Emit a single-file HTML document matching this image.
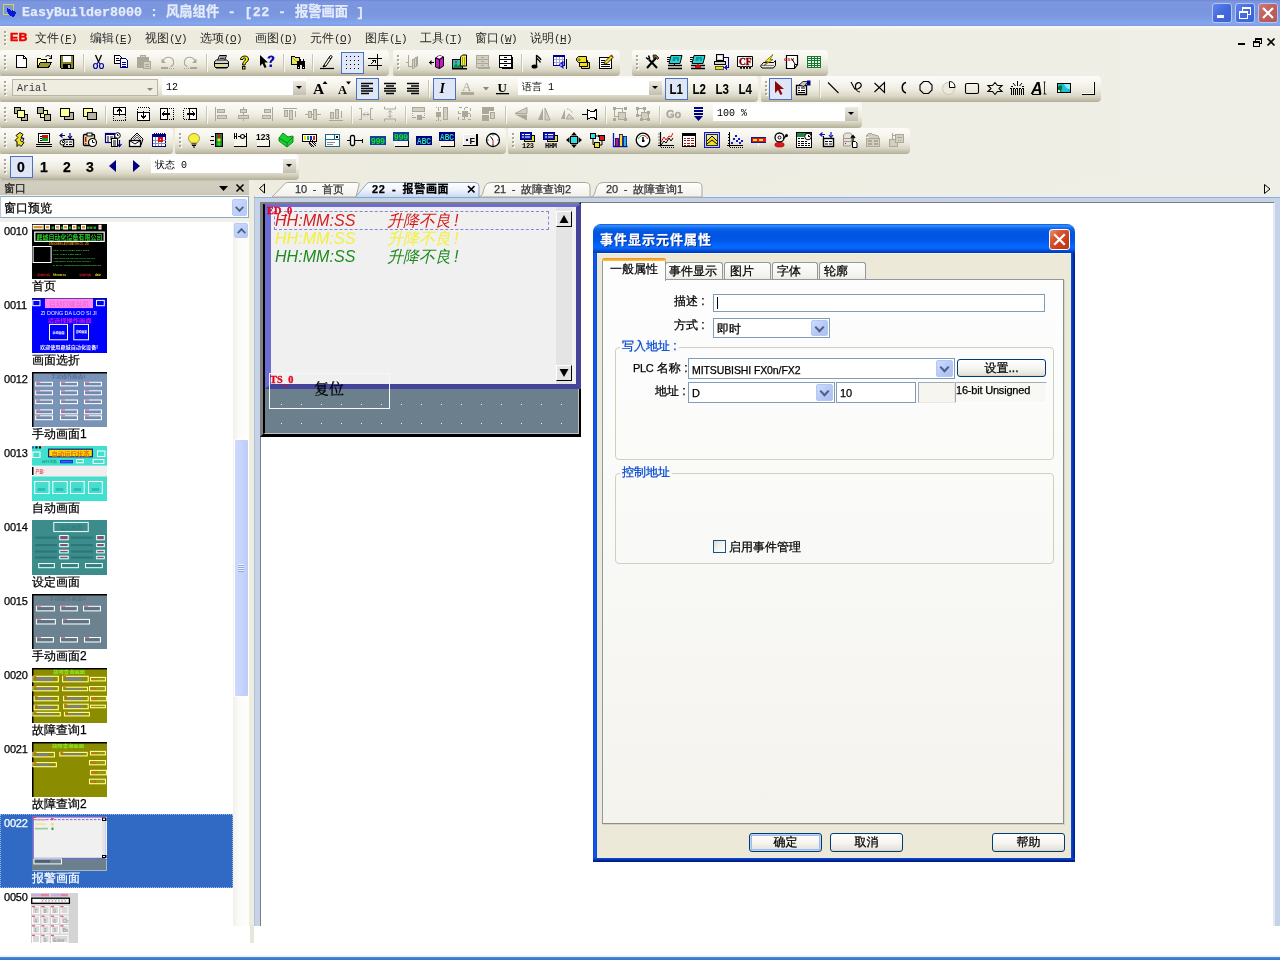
<!DOCTYPE html>
<html lang="zh-CN"><head><meta charset="utf-8"><title>EasyBuilder8000</title>
<style>
*{box-sizing:border-box}
html,body{margin:0;padding:0}
body{width:1280px;height:960px;overflow:hidden;background:#fff;position:relative;
 font-family:"Liberation Sans","WenQuanYi Zen Hei","Noto Sans CJK SC",sans-serif;font-size:12px;color:#000;line-height:12px;-webkit-text-stroke:0.25px}
#root{position:absolute;left:0;top:0;width:1280px;height:960px;overflow:hidden;will-change:transform}
.a{position:absolute}
.m{font-family:"Liberation Mono","Noto Sans CJK SC",monospace;font-size:11px;letter-spacing:-0.6px}
.tb{position:absolute;height:26px;border-radius:2px 4px 4px 2px;
 background:linear-gradient(to bottom,#FCFBF8 0,#F7F6EF 7px,#EDEBDF 14px,#DAD7C6 20px,#C7C4B0 23px,#B9B6A2 25px,#B0AD99 26px)}
.grip{position:absolute;left:4px;top:5px;width:3px;height:15px;
 background:
  linear-gradient(#A9A793,#A9A793) 0 0/2px 2px no-repeat,
  linear-gradient(#A9A793,#A9A793) 0 4px/2px 2px no-repeat,
  linear-gradient(#A9A793,#A9A793) 0 8px/2px 2px no-repeat,
  linear-gradient(#A9A793,#A9A793) 0 12px/2px 2px no-repeat,
  linear-gradient(#fff,#fff) 1px 1px/2px 2px no-repeat,
  linear-gradient(#fff,#fff) 1px 5px/2px 2px no-repeat,
  linear-gradient(#fff,#fff) 1px 9px/2px 2px no-repeat,
  linear-gradient(#fff,#fff) 1px 13px/2px 2px no-repeat}
.sep{position:absolute;top:4px;width:2px;height:18px;border-left:1px solid #C9C6B5;border-right:1px solid rgba(255,255,255,.7)}
.ic{position:absolute;top:4px;width:16px;height:16px;overflow:visible}
.ic svg{display:block;overflow:visible}
.chk{position:absolute;top:2px;width:23px;height:22px;border:1px solid #4B70C0;background:#DFE7F7}
.cb{position:absolute;-webkit-text-stroke:0;top:2px;height:17px;background:#fff;font-family:"Liberation Mono","WenQuanYi Zen Hei",monospace;font-size:10px;line-height:19px;padding-left:4px;color:#000;white-space:nowrap}
.cbb{position:absolute;right:0;top:3px;width:13px;height:14px;background:linear-gradient(#EDEBE2,#D4D1C4 60%,#C2BFB0)}
.cbb:after{content:"";position:absolute;left:3px;top:5px;border:3px solid transparent;border-top:3.5px solid #000;border-bottom:0}
.cb.gr .cbb{background:none}
.cb.gr .cbb:after{border-top-color:#8A8878}
.tx{position:absolute;white-space:nowrap}

.li{position:absolute;left:0;width:233px;height:74px}
.li .n{position:absolute;left:4px;top:3px;font:11px/12px "Liberation Sans",sans-serif;letter-spacing:-0.2px}
.li .t{position:absolute;left:32px;top:58px;font:12px/12px "Liberation Sans","WenQuanYi Zen Hei","Noto Sans CJK SC",sans-serif;white-space:nowrap}
.li .th{position:absolute;left:32px;top:2px;width:75px;height:55px;overflow:hidden}

.xpdd{width:15px;height:17px;border:1px solid #B7C8F5;border-radius:2px;background:linear-gradient(135deg,#CBD9FC,#B6C8F6)}
.xpdd:after{content:"";position:absolute;left:3px;top:4px;width:5px;height:5px;border-right:2px solid #4D6185;border-bottom:2px solid #4D6185;transform:rotate(45deg) scale(0.9);transform-origin:50% 50%}
.xpsb{width:14px;height:15px;border:1px solid #B7C8F5;border-radius:2px;background:linear-gradient(135deg,#CBD9FC,#B6C8F6)}
.xpsb.up:after{content:"";position:absolute;left:3px;top:5px;width:5px;height:5px;border-left:2px solid #4D6185;border-top:2px solid #4D6185;transform:rotate(45deg) scale(0.9)}

.tab{position:absolute;top:182px;height:14px;font:11px/14px "Liberation Sans","WenQuanYi Zen Hei","Noto Sans CJK SC",sans-serif;white-space:nowrap;color:#333;word-spacing:2.5px}
.ev{position:absolute;white-space:nowrap;-webkit-text-stroke:0;font:italic 16px/18px "Liberation Sans","WenQuanYi Zen Hei","Noto Sans CJK SC",sans-serif}
.ev2{position:absolute;white-space:nowrap;font:italic 16px/18px "Liberation Serif","WenQuanYi Zen Hei","Noto Sans CJK SC",sans-serif}
.olab{position:absolute;white-space:nowrap;-webkit-text-stroke:0.3px;font:bold 9.5px/10px "Liberation Serif",serif;color:#E8001C;letter-spacing:0.2px;transform:scaleX(1.08);transform-origin:0 0}
.sbtn{position:absolute;width:16px;height:16px;background:#E4E4E4;border-top:1px solid #fff;border-left:1px solid #fff;border-right:1px solid #000;border-bottom:1px solid #000}

.dlg{position:absolute;left:593px;top:224px;width:482px;height:638px;border-radius:8px 8px 0 0;background:#ECE9D8;overflow:hidden}
.dlg .ttl{position:absolute;left:0;top:0;width:482px;height:29px;
 background:linear-gradient(to bottom,#0A48CC 0,#2B82F6 1px,#3090FF 2px,#1E78F6 3px,#0C62EA 5px,#0357E3 8px,#0054E0 12px,#0158EA 17px,#0262F6 20px,#0669FF 23px,#0560F0 25px,#0348D0 27px,#0238B0 29px)}
.dlg .bl{position:absolute;left:0;top:29px;width:4px;height:609px;background:linear-gradient(to right,#0A3FD0,#0A52E6 1px,#1660EE 2px,#0A4ADC 3px)}
.dlg .br{position:absolute;right:0;top:29px;width:4px;height:609px;background:linear-gradient(to right,#0A4ADC,#0A45D2 1px,#0334B4 2px,#00238C 3px)}
.dlg .bb{position:absolute;left:0;bottom:0;width:482px;height:4px;background:linear-gradient(to bottom,#0A4ADC,#0A3DC6 1px,#042EA6 2px,#001C84 3px)}
.dt{position:absolute;white-space:nowrap;font:12px/12px "Liberation Sans","WenQuanYi Zen Hei","Noto Sans CJK SC",sans-serif}
.tabx{position:absolute;top:38px;height:17px;border:1px solid #919B9C;border-bottom:0;border-radius:3px 3px 0 0;background:linear-gradient(#FDFDFC,#F5F4EF 70%,#ECEBE4)}
.edit{position:absolute;background:#fff;border:1px solid #7F9DB9}
.ddb{position:absolute;right:1px;top:1px;width:17px;border:1px solid #B4C6F2;border-radius:2px;background:linear-gradient(135deg,#CDDBFD,#B5C7F5 60%,#AEC1F2)}
.ddb:after{content:"";position:absolute;left:4px;top:3px;width:5px;height:5px;border-right:2px solid #4D6185;border-bottom:2px solid #4D6185;transform:rotate(45deg)}
.btn{position:absolute;height:19px;border:1px solid #003C74;border-radius:3px;background:linear-gradient(#fff,#F6F5F0 50%,#E6E4DA 90%,#D6D0C5);text-align:center;font:12px/17px "Liberation Sans","WenQuanYi Zen Hei","Noto Sans CJK SC",sans-serif}
.grp{position:absolute;border:1px solid #D0D0BF;border-radius:4px}
.gl{position:absolute;white-space:nowrap;color:#0046D5;font:12px/12px "Liberation Sans","WenQuanYi Zen Hei","Noto Sans CJK SC",sans-serif;padding:0 2px}
</style></head>
<body>
<div id="root">
<div class="a" style="left:0;top:0;width:1280px;height:26px;background:linear-gradient(to bottom,#6F87D6 0,#7C97E0 2px,#7A96DF 8px,#7A96DF 14px,#7F9FE6 20px,#86A8EE 24px,#7B97DC 26px)"></div>
<div class="a" style="left:2px;top:3px;width:17px;height:17px"><svg width="17" height="17" viewBox="0 0 17 17" shape-rendering="crispEdges"><rect x="1.5" y="1.5" width="10" height="10" fill="none" stroke="#D8D838" stroke-width="1"/><path d="M5 5l2 1 2 2 1-1 1 1 1 0 1 1 1 1-1 2-2 2-3-1-2-3-1-3z" fill="#0818D8"/></svg></div>
<div class="tx" style="left:22px;top:5px;font:bold 13.33px/16px 'Liberation Mono','Noto Sans CJK SC',monospace;color:#E4EBFA">EasyBuilder8000 : 风扇组件<span style="letter-spacing:0.4px"> - [22 - </span>报警画面 ]</div>
<div class="a" style="left:1212px;top:3px;width:20px;height:20px;border:1px solid #B3C6F4;border-radius:3px;background:linear-gradient(135deg,#5F86EC,#4369DE 50%,#3D62D4)"><svg width="18" height="18" viewBox="0 0 18 18" shape-rendering="crispEdges"><rect x="4" y="11" width="7" height="3" fill="#fff"/></svg></div>
<div class="a" style="left:1235px;top:3px;width:20px;height:20px;border:1px solid #B3C6F4;border-radius:3px;background:linear-gradient(135deg,#5F86EC,#4369DE 50%,#3D62D4)"><svg width="18" height="18" viewBox="0 0 18 18" shape-rendering="crispEdges"><path d="M6.500 6.500v-3h8v7h-3" fill="none" stroke="#fff" stroke-width="1"/><rect x="6" y="3" width="9" height="2" fill="#fff"/><rect x="3.500" y="7.500" width="8" height="7" fill="none" stroke="#fff"/><rect x="3" y="7" width="9" height="2" fill="#fff"/></svg></div>
<div class="a" style="left:1258px;top:3px;width:20px;height:20px;border:1px solid #B3C6F4;border-radius:3px;background:linear-gradient(135deg,#CC7A74,#BE5F5C 50%,#B35856)"><svg width="18" height="18" viewBox="0 0 18 18" shape-rendering="geometricPrecision"><path d="M4 4l10 10m0-10l-10 10" stroke="#fff" stroke-width="2.2" fill="none"/></svg></div>
<div class="a" style="left:0;top:26px;width:1280px;height:154px;background:linear-gradient(to right,#ECEADB,#EEEDE3 50%,#F0EFE7)"></div>
<div class="a" style="left:0;top:26px;width:1280px;height:5px;background:linear-gradient(to bottom,rgba(255,255,255,.75),rgba(255,255,255,.3) 2px,rgba(255,255,255,0))"></div>
<div class="grip" style="left:4px;top:31px"></div>
<div class="tx" style="left:10px;top:31px;font:bold 11px/12px 'Liberation Sans',sans-serif;color:#F00000;letter-spacing:0.2px;transform:scaleX(1.12);transform-origin:0 0;-webkit-text-stroke:0.5px #F00000">EB</div>
<div class="tx" style="left:35px;top:32px;color:#2A2A2A;-webkit-text-stroke:0">文件<span class="m">(<u>F</u>)</span></div>
<div class="tx" style="left:90px;top:32px;color:#2A2A2A;-webkit-text-stroke:0">编辑<span class="m">(<u>E</u>)</span></div>
<div class="tx" style="left:145px;top:32px;color:#2A2A2A;-webkit-text-stroke:0">视图<span class="m">(<u>V</u>)</span></div>
<div class="tx" style="left:200px;top:32px;color:#2A2A2A;-webkit-text-stroke:0">选项<span class="m">(<u>O</u>)</span></div>
<div class="tx" style="left:255px;top:32px;color:#2A2A2A;-webkit-text-stroke:0">画图<span class="m">(<u>D</u>)</span></div>
<div class="tx" style="left:310px;top:32px;color:#2A2A2A;-webkit-text-stroke:0">元件<span class="m">(<u>O</u>)</span></div>
<div class="tx" style="left:365px;top:32px;color:#2A2A2A;-webkit-text-stroke:0">图库<span class="m">(<u>L</u>)</span></div>
<div class="tx" style="left:420px;top:32px;color:#2A2A2A;-webkit-text-stroke:0">工具<span class="m">(<u>T</u>)</span></div>
<div class="tx" style="left:475px;top:32px;color:#2A2A2A;-webkit-text-stroke:0">窗口<span class="m">(<u>W</u>)</span></div>
<div class="tx" style="left:530px;top:32px;color:#2A2A2A;-webkit-text-stroke:0">说明<span class="m">(<u>H</u>)</span></div>
<div class="a" style="left:1236px;top:36px;width:40px;height:12px"><svg width="40" height="12" viewBox="0 0 40 12" shape-rendering="crispEdges"><rect x="2" y="7" width="7" height="2" fill="#000"/><path d="M19.500 4.500v-2h6v5h-2" fill="none" stroke="#000"/><rect x="19" y="2" width="7" height="2" fill="#000"/><rect x="17.500" y="5.500" width="6" height="5" fill="none" stroke="#000"/><rect x="17" y="5" width="7" height="2" fill="#000"/><path d="M31.500 2.500l7 7m0-7l-7 7" stroke="#000" stroke-width="1.700" fill="none" shape-rendering="geometricPrecision"/></svg></div>
<div class="tb" style="left:0px;top:50px;width:389px"><div class="grip"></div><div class="ic" style="left:14px"><svg width="16" height="16" viewBox="0 0 16 16" shape-rendering="crispEdges"><path d="M2.500 1.500h7l3 3v9h-10z" fill="#fff" stroke="#000"/><path d="M9.500 1.500v3h3" fill="none" stroke="#000"/></svg></div><div class="ic" style="left:36px"><svg width="16" height="16" viewBox="0 0 16 16" shape-rendering="crispEdges"><path d="M1.500 13.500v-9h3l1 1h5v3" fill="#FFFF9C" stroke="#000"/><path d="M1.500 13.500l3-5h11l-3 5z" fill="#9A9A30" stroke="#000"/><path d="M9.500 3c1-2 4-2 5.500 0.500" stroke="#000" fill="none" shape-rendering="geometricPrecision"/><path d="M15.500 1v3h-3" stroke="#000" fill="none"/></svg></div><div class="ic" style="left:59px"><svg width="16" height="16" viewBox="0 0 16 16" shape-rendering="crispEdges"><path d="M1.500 1.500h13v13h-12l-1-1z" fill="#84842A" stroke="#000"/><rect x="4" y="2" width="8" height="6" fill="#fff"/><rect x="4" y="10" width="8" height="4" fill="#000"/><rect x="9" y="11" width="2" height="3" fill="#C8C8B0"/></svg></div><div class="sep" style="left:83px"></div><div class="ic" style="left:90px"><svg width="16" height="16" viewBox="0 0 16 16" shape-rendering="geometricPrecision"><path d="M5.500 1l3.500 8M11.500 1l-3.500 8" stroke="#000" stroke-width="1.300" fill="none"/><ellipse cx="5.500" cy="12" rx="2" ry="2.500" fill="none" stroke="#0808A8" stroke-width="1.200"/><ellipse cx="11.500" cy="12" rx="2" ry="2.500" fill="none" stroke="#0808A8" stroke-width="1.200"/><path d="M7 10l1.500-2 1.500 2" stroke="#0808A8" fill="none"/></svg></div><div class="ic" style="left:113px"><svg width="16" height="16" viewBox="0 0 16 16" shape-rendering="crispEdges"><path d="M1.500 1.500h5l2 2v6h-7z" fill="#fff" stroke="#000"/><path d="M3 4h3M3 6h4" stroke="#000"/><path d="M7.500 4.500h5l2 2v7h-7z" fill="#fff" stroke="#000084"/><path d="M9 8h4M9 10h4M9 12h4" stroke="#000084"/></svg></div><div class="ic" style="left:136px"><svg width="16" height="16" viewBox="0 0 16 16" shape-rendering="crispEdges"><path d="M1.500 3.500h11v10h-11z" fill="#ACA899" stroke="#ACA899"/><rect x="4" y="1" width="6" height="3" fill="#ACA899"/><rect x="5" y="2" width="4" height="1" fill="#D2CFC0"/><path d="M7.500 7.500h7v7h-7z" fill="#D2CFC0" stroke="#ACA899"/><path d="M9 10h4M9 12h4" stroke="#ACA899"/></svg></div><div class="ic" style="left:160px"><svg width="16" height="16" viewBox="0 0 16 16" shape-rendering="geometricPrecision"><path d="M3 7c2-5 9-5 10.500 0c0.500 3-1 5-3 5.500" fill="none" stroke="#ACA899" stroke-width="1.100"/><path d="M1.500 4.500v4.500h4.500z" fill="#ACA899"/><rect x="1" y="13" width="7" height="2" fill="#ACA899"/><rect x="9" y="14" width="1" height="1" fill="#ACA899"/><rect x="11" y="14" width="1" height="1" fill="#ACA899"/><rect x="13" y="14" width="1" height="1" fill="#ACA899"/></svg></div><div class="ic" style="left:182px"><svg width="16" height="16" viewBox="0 0 16 16" shape-rendering="geometricPrecision"><path d="M13 7c-2-5-9-5-10.500 0c-0.500 3 1 5 3 5.500" fill="none" stroke="#ACA899" stroke-width="1.100"/><path d="M14.500 4.500v4.500h-4.500z" fill="#ACA899"/><rect x="8" y="13" width="7" height="2" fill="#ACA899"/><rect x="6" y="14" width="1" height="1" fill="#ACA899"/><rect x="4" y="14" width="1" height="1" fill="#ACA899"/><rect x="2" y="14" width="1" height="1" fill="#ACA899"/></svg></div><div class="sep" style="left:206px"></div><div class="ic" style="left:213px"><svg width="16" height="16" viewBox="0 0 16 16" shape-rendering="geometricPrecision"><path d="M4.500 6.500l2-5h7l-2 5" fill="#fff" stroke="#000"/><path d="M7 3h5M6.500 4.500h5" stroke="#000" stroke-width="0.800"/><path d="M1.500 7.500l2-1.500h10l2 1.500v5l-2 1.500h-10l-2-1.500z" fill="#D6D3CE" stroke="#000"/><path d="M1.500 9.500h14" stroke="#000"/><rect x="3" y="11" width="8" height="1" fill="#E8E840"/><path d="M2 13.500h13" stroke="#000"/></svg></div><div class="ic" style="left:236px"><svg width="16" height="16" viewBox="0 0 16 16" shape-rendering="geometricPrecision"><path d="M4.500 5.500c0-4.500 8-4.500 8-0.500c0 3-3.500 3-3.500 6h-2.500c0-3.500 3-4 3-6c0-1.500-2.500-1.500-2.500 0.500z" fill="#F0F000" stroke="#000" stroke-width="1"/><rect x="6.500" y="12.500" width="2.500" height="2.500" fill="#F0F000" stroke="#000"/></svg></div><div class="ic" style="left:259px"><svg width="16" height="16" viewBox="0 0 16 16" shape-rendering="geometricPrecision"><path d="M1 1v11l2.500-2.500 2 4.500 2-1-2-4.500h3.500z" fill="#000"/><path d="M8.500 4.500c0-4 7-4 7-0.500c0 2.500-3 3-3 5h-2c0-3 2.500-3.500 2.500-5c0-1-2-1-2 0.500z" fill="#1010B0"/><rect x="10.500" y="10.500" width="2.500" height="2.500" fill="#1010B0"/></svg></div><div class="sep" style="left:283px"></div><div class="ic" style="left:290px"><svg width="16" height="16" viewBox="0 0 16 16" shape-rendering="crispEdges"><path d="M1.500 2.500h3l1 1h4v7h-8z" fill="#E8E860" stroke="#000"/><path d="M3 4l4 4" stroke="#B8A820"/><path d="M7 7h3v-2h1v2h2v-2h1v2h1v8h-3v-4h-2v4h-3z" fill="#000"/><rect x="8" y="13" width="1" height="1" fill="#fff"/><rect x="13" y="13" width="1" height="1" fill="#fff"/></svg></div><div class="sep" style="left:312px"></div><div class="ic" style="left:319px"><svg width="16" height="16" viewBox="0 0 16 16" shape-rendering="geometricPrecision"><path d="M5 11l6-9c1-1 2.500 0 2 1l-6 9-3 1z" fill="#fff" stroke="#000" stroke-width="1"/><path d="M5 11l2 1-3 1z" fill="#000"/><path d="M10 3.500l2 1.500" stroke="#000"/><path d="M1 14.500h14" stroke="#000" stroke-width="1.200"/></svg></div><div class="chk" style="left:341px"></div><div class="ic" style="left:344px"><svg width="16" height="16" viewBox="0 0 16 16" shape-rendering="crispEdges"><rect x="2" y="2" width="1.300" height="1.300" fill="#000"/><rect x="2" y="6" width="1.300" height="1.300" fill="#000"/><rect x="2" y="10" width="1.300" height="1.300" fill="#000"/><rect x="2" y="14" width="1.300" height="1.300" fill="#000"/><rect x="6" y="2" width="1.300" height="1.300" fill="#000"/><rect x="6" y="6" width="1.300" height="1.300" fill="#000"/><rect x="6" y="10" width="1.300" height="1.300" fill="#000"/><rect x="6" y="14" width="1.300" height="1.300" fill="#000"/><rect x="10" y="2" width="1.300" height="1.300" fill="#000"/><rect x="10" y="6" width="1.300" height="1.300" fill="#000"/><rect x="10" y="10" width="1.300" height="1.300" fill="#000"/><rect x="10" y="14" width="1.300" height="1.300" fill="#000"/><rect x="14" y="2" width="1.300" height="1.300" fill="#000"/><rect x="14" y="6" width="1.300" height="1.300" fill="#000"/><rect x="14" y="10" width="1.300" height="1.300" fill="#000"/><rect x="14" y="14" width="1.300" height="1.300" fill="#000"/></svg></div><div class="ic" style="left:367px"><svg width="16" height="16" viewBox="0 0 16 16" shape-rendering="crispEdges"><path d="M1 4.500h14M1 11.500h14M10.500 0v16" stroke="#000" stroke-width="1"/><path d="M4 10l4-4m0 0h-3m3 0v3" stroke="#000" stroke-width="1" fill="none"/></svg></div></div>
<div class="tb" style="left:393px;top:50px;width:227px"><div class="grip"></div><div class="ic" style="left:12px"><svg width="16" height="16" viewBox="0 0 16 16" shape-rendering="crispEdges"><path d="M3.500 1v7h-3M3.500 8v4h3" stroke="#ACA899" fill="none"/><path d="M7 6l5-3v9l-5 3zM9 5v9M11 4v9" fill="#D2CFC0" stroke="#ACA899"/></svg></div><div class="ic" style="left:36px"><svg width="16" height="16" viewBox="0 0 16 16" shape-rendering="geometricPrecision"><path d="M0 8.500h5" stroke="#000"/><path d="M0 8.500l2.500-2.500v5z" fill="#000"/><path d="M6.500 4l4-2.500 4 1.500v9l-4 2.500-4-1.500z" fill="#C818C8" stroke="#000"/><path d="M6.500 4l4 1.500v9M10.500 5.500l4-2.500" stroke="#000" fill="none"/><path d="M7.500 3.500l3-2 3 1-3 2z" fill="#fff"/></svg></div><div class="ic" style="left:59px"><svg width="16" height="16" viewBox="0 0 16 16" shape-rendering="geometricPrecision"><rect x="0.500" y="5.500" width="10" height="9" fill="#18C8C8" stroke="#000"/><path d="M1 14l3-5 2 3 2-2 2 4z" fill="#208040"/><circle cx="4" cy="8" r="1.200" fill="#E03030"/><path d="M8.500 3l2-2h4v11h-6z" fill="#F0F040" stroke="#000"/><path d="M10 4h1M12 4h1M10 6h1M12 6h1M10 8h1M12 8h1M10 10h1M12 10h1" stroke="#605000"/><rect x="0" y="14" width="15" height="1.500" fill="#000"/></svg></div><div class="ic" style="left:82px"><svg width="16" height="16" viewBox="0 0 16 16" shape-rendering="crispEdges"><rect x="1.500" y="1.500" width="12" height="12" fill="#D2CFC0" stroke="#ACA899" stroke-width="1.500"/><path d="M1.500 5.500h12M1.500 9.500h12" stroke="#ACA899" stroke-width="1.500"/><path d="M6 3.500h3M6 7.500h3M6 11.500h3" stroke="#ACA899"/><rect x="3" y="13" width="12" height="2" fill="#ACA899"/></svg></div><div class="ic" style="left:105px"><svg width="16" height="16" viewBox="0 0 16 16" shape-rendering="crispEdges"><rect x="1.500" y="1.500" width="12" height="12" fill="#fff" stroke="#000" stroke-width="1.500"/><path d="M1.500 5.500h12M1.500 9.500h12" stroke="#000" stroke-width="1.500"/><path d="M6 3.500h3M6 7.500h3M6 11.500h3" stroke="#000"/><path d="M14.500 3v11.500h-11" stroke="#000" fill="none"/></svg></div><div class="sep" style="left:128px"></div><div class="ic" style="left:136px"><svg width="16" height="16" viewBox="0 0 16 16" shape-rendering="geometricPrecision"><path d="M7.500 12v-11c1 2 3.500 2.500 4.500 5M7.500 4c1 1.500 3 2 4 4.500" stroke="#000" stroke-width="1.300" fill="none"/><ellipse cx="5.500" cy="12.500" rx="3" ry="2" fill="#000"/></svg></div><div class="ic" style="left:159px"><svg width="16" height="16" viewBox="0 0 16 16" shape-rendering="geometricPrecision"><rect x="1.500" y="1.500" width="11" height="10" fill="#fff" stroke="#000084" shape-rendering="crispEdges"/><rect x="1" y="1" width="12" height="2" fill="#000084"/><path d="M2 5.500h10M2 8.500h10M4.500 3v8M7.500 3v8M10.500 3v8" stroke="#A8A8D8" stroke-width="1" shape-rendering="crispEdges"/><path d="M11.500 6.500l-5 4.500 5 4z" fill="#1818D8"/><path d="M8 11h2" stroke="#fff"/><path d="M14.500 5v10" stroke="#000" shape-rendering="crispEdges"/></svg></div><div class="ic" style="left:182px"><svg width="16" height="16" viewBox="0 0 16 16" shape-rendering="geometricPrecision"><path d="M6.500 8.500h8v6h-8z" fill="#F0E020" stroke="#000"/><path d="M4.500 6.500h8v6h-8z" fill="#F0E020" stroke="#000"/><path d="M3.500 2.500h8v6h-8l-2-2v-2z" fill="#F0E020" stroke="#000"/><rect x="3" y="5" width="2" height="1.500" fill="#fff" stroke="#000" stroke-width="0.500"/></svg></div><div class="ic" style="left:205px"><svg width="16" height="16" viewBox="0 0 16 16" shape-rendering="geometricPrecision"><rect x="1.500" y="3.500" width="12" height="11" fill="#fff" stroke="#000"/><rect x="1" y="3" width="13" height="1" fill="#000"/><path d="M3 6.500h4M3 8.500h3M3 10.500h9M3 12.500h9" stroke="#000" stroke-width="1" shape-rendering="crispEdges"/><path d="M6 10.500l1-3 6-6 2 2-6 6z" fill="#F0E020" stroke="#000" stroke-width="0.800"/><path d="M13 1l2 2" stroke="#804000" stroke-width="1.500"/></svg></div></div>
<div class="tb" style="left:632px;top:50px;width:196px"><div class="grip"></div><div class="ic" style="left:12px"><svg width="16" height="16" viewBox="0 0 16 16" shape-rendering="geometricPrecision"><path d="M3 14l9-10" stroke="#000" stroke-width="2"/><path d="M9 1l3 0 3 3-1.500 1.500-2-2-2 1z" fill="#806020" stroke="#000" stroke-width="0.700"/><path d="M13 14l-8-8.500" stroke="#000" stroke-width="2"/><path d="M2 3.500l2 1.500 1.500-1-1-2.500" stroke="#000" stroke-width="1.500" fill="none"/></svg></div><div class="ic" style="left:35px"><svg width="16" height="16" viewBox="0 0 16 16" shape-rendering="geometricPrecision"><path d="M4 1.500h11l-2 8h-11z" fill="#20D8D8" stroke="#000"/><path d="M6 4h6M5.500 6h3M10 6h2" stroke="#105060"/><path d="M0 3.500h3M0 5.500h2.500M0 7.500h2" stroke="#000"/><path d="M1 11.500h14M1 14.500h14" stroke="#000" stroke-width="1.300"/><path d="M7.500 9.500v2" stroke="#000"/></svg></div><div class="ic" style="left:58px"><svg width="16" height="16" viewBox="0 0 16 16" shape-rendering="geometricPrecision"><path d="M4 1.500h11l-2 8h-11z" fill="#20D8D8" stroke="#000"/><path d="M6 4h6M5.500 6h3M10 6h2" stroke="#105060"/><path d="M0 3.500h3M0 5.500h2.500M0 7.500h2" stroke="#000"/><path d="M1 11.500h14M1 14.500h14" stroke="#000" stroke-width="1.300"/><path d="M5 13l3-3.500 3 3.500z" fill="#D01010"/><rect x="5" y="12" width="6" height="2" fill="#D01010"/></svg></div><div class="ic" style="left:81px"><svg width="16" height="16" viewBox="0 0 16 16" shape-rendering="crispEdges"><rect x="3.500" y="0.500" width="7" height="6" fill="#D6D3CE" stroke="#000"/><rect x="5" y="2" width="4" height="3" fill="#fff"/><path d="M1.500 7.500h11v3h-11z" fill="#D6D3CE" stroke="#000"/><rect x="2" y="12" width="8" height="3" fill="#F0E020" stroke="#000" stroke-width="0.600"/><path d="M11 3.500h4v10h-3" stroke="#000084" fill="none"/><path d="M10.500 13.500l3-2.500v5z" fill="#1010D0"/></svg></div><div class="ic" style="left:105px"><svg width="16" height="16" viewBox="0 0 16 16" shape-rendering="geometricPrecision"><path d="M0.500 2.500h15v10h-2v2h-1v-2h-2v2h-1v-2h-2v2h-1v-2h-2v2h-1v-2h-3z" fill="#fff" stroke="#000"/><text x="2" y="11" font-family="Liberation Serif,serif" font-weight="bold" font-size="9.500" fill="#800000" stroke="#800000" stroke-width="0.400">CF</text></svg></div><div class="ic" style="left:128px"><svg width="16" height="16" viewBox="0 0 16 16" shape-rendering="geometricPrecision"><path d="M3.500 8.500h10l2-2v5l-2 2.500h-11.500l-1.500-2z" fill="#E8E8E8" stroke="#000"/><path d="M1 11.500h13" stroke="#808080"/><path d="M13 0.500l-8 7h3l-4 4 9-6h-3z" fill="#F0E818" stroke="#504000" stroke-width="0.600"/></svg></div><div class="ic" style="left:151px"><svg width="16" height="16" viewBox="0 0 16 16" shape-rendering="geometricPrecision"><path d="M3.500 1.500h11v9l-3 4h-8z" fill="#fff" stroke="#000" stroke-width="1.200"/><path d="M11.500 14v-3.500h3" stroke="#000" fill="none"/><text x="1" y="7" font-family="Liberation Sans,sans-serif" font-weight="bold" font-size="6" fill="#C01010">csv</text><path d="M9 5l3 5" stroke="#000"/></svg></div><div class="ic" style="left:174px"><svg width="16" height="16" viewBox="0 0 16 16" shape-rendering="crispEdges"><rect x="1" y="2" width="14" height="12" fill="#E8F4E8"/><path d="M1.500 2v12M5.500 2v12M8.500 2v12M11.500 2v12M14.500 2v12M1 2.500h14M1 4.500h14M1 6.500h14M1 9.500h14M1 11.500h14M1 13.500h14" stroke="#187830" stroke-width="1"/></svg></div></div>
<div class="tb" style="left:0px;top:76px;width:758px"><div class="grip"></div><div class="cb gr" style="left:12px;width:146px;background:#EFEDE0;border:1px solid #B9B6A6;top:3px;height:17px;line-height:17px;color:#333;">Arial<div class="cbb"></div></div><div class="cb" style="left:162px;width:144px;background:#fff;">12<div class="cbb"></div></div><div class="ic" style="left:313px"><svg width="16" height="16" viewBox="0 0 16 16" shape-rendering="geometricPrecision"><text x="0" y="13.5" font-family="Liberation Serif,serif" font-weight="bold" font-size="15.5" fill="#000">A</text><path d="M9.500 4l2.500-3 2.500 3z" fill="#000"/></svg></div><div class="ic" style="left:336px"><svg width="16" height="16" viewBox="0 0 16 16" shape-rendering="geometricPrecision"><text x="2" y="13.5" font-family="Liberation Serif,serif" font-weight="bold" font-size="12.5" fill="#000">A</text><path d="M10 1.500h5l-2.500 3z" fill="#000"/></svg></div><div class="chk" style="left:356px"></div><div class="ic" style="left:359px"><svg width="16" height="16" viewBox="0 0 16 16" shape-rendering="geometricPrecision"><path d="M2 3.500h12M2 6h8M2 8.500h12M2 11h12M2 13.500h8" stroke="#000" stroke-width="1.300"/></svg></div><div class="ic" style="left:382px"><svg width="16" height="16" viewBox="0 0 16 16" shape-rendering="geometricPrecision"><path d="M2 3.500h12M4 6h8M2 8.500h12M2 11h12M4 13.500h8" stroke="#000" stroke-width="1.300"/></svg></div><div class="ic" style="left:405px"><svg width="16" height="16" viewBox="0 0 16 16" shape-rendering="geometricPrecision"><path d="M2 3.500h12M6 6h8M2 8.500h12M2 11h12M6 13.500h8" stroke="#000" stroke-width="1.300"/></svg></div><div class="sep" style="left:428px"></div><div class="chk" style="left:433px"></div><div class="ic" style="left:436px"><svg width="16" height="16" viewBox="0 0 16 16" shape-rendering="geometricPrecision"><text x="3.500" y="13" font-family="Liberation Serif,serif" font-weight="bold" font-style="italic" font-size="14" fill="#000">I</text></svg></div><div class="ic" style="left:460px"><svg width="16" height="16" viewBox="0 0 16 16" shape-rendering="geometricPrecision"><text x="2" y="11" font-family="Liberation Serif,serif" font-size="13" fill="#ACA899">A</text><rect x="1" y="12" width="13" height="3" fill="#ACA899"/></svg></div><div class="ic" style="left:478px"><svg width="16" height="16" viewBox="0 0 16 16" shape-rendering="geometricPrecision"><path d="M5 7h6l-3 3.500z" fill="#8A8778"/></svg></div><div class="ic" style="left:495px"><svg width="16" height="16" viewBox="0 0 16 16" shape-rendering="geometricPrecision"><text x="2.500" y="11.500" font-family="Liberation Serif,serif" font-weight="bold" font-size="13" fill="#000">U</text><rect x="1" y="13" width="13" height="1.300" fill="#000"/></svg></div><div class="cb" style="left:518px;width:144px;background:#fff;">语言 1<div class="cbb"></div></div><div class="chk" style="left:665px"></div><div class="ic" style="left:668px"><svg width="18" height="16" viewBox="0 0 18 16" shape-rendering="geometricPrecision"><text x="1.500" y="14" font-family="Liberation Sans,sans-serif" font-weight="bold" font-size="14" fill="#000" textLength="13.500" lengthAdjust="spacingAndGlyphs">L1</text></svg></div><div class="ic" style="left:691px"><svg width="18" height="16" viewBox="0 0 18 16" shape-rendering="geometricPrecision"><text x="1.500" y="14" font-family="Liberation Sans,sans-serif" font-weight="bold" font-size="14" fill="#000" textLength="13.500" lengthAdjust="spacingAndGlyphs">L2</text></svg></div><div class="ic" style="left:714px"><svg width="18" height="16" viewBox="0 0 18 16" shape-rendering="geometricPrecision"><text x="1.500" y="14" font-family="Liberation Sans,sans-serif" font-weight="bold" font-size="14" fill="#000" textLength="13.500" lengthAdjust="spacingAndGlyphs">L3</text></svg></div><div class="ic" style="left:737px"><svg width="18" height="16" viewBox="0 0 18 16" shape-rendering="geometricPrecision"><text x="1.500" y="14" font-family="Liberation Sans,sans-serif" font-weight="bold" font-size="14" fill="#000" textLength="13.500" lengthAdjust="spacingAndGlyphs">L4</text></svg></div></div>
<div class="tb" style="left:761px;top:76px;width:340px"><div class="grip"></div><div class="chk" style="left:8px"></div><div class="ic" style="left:11px"><svg width="16" height="16" viewBox="0 0 16 16" shape-rendering="geometricPrecision"><path d="M3 1v12l3-3 2.500 5 2-1-2.500-5h4z" fill="#8C0808"/></svg></div><div class="ic" style="left:34px"><svg width="16" height="16" viewBox="0 0 16 16" shape-rendering="geometricPrecision"><path d="M1.500 5.500h10v9h-10z" fill="#fff" stroke="#000" stroke-width="1.300"/><path d="M3 8h2M6 8h4M3 10.500h2M6 10.500h4M3 12.500h7" stroke="#000"/><path d="M4 5l4-3.500h5l-4 5z" fill="#C8C8C8" stroke="#000" stroke-width="0.800"/><rect x="12" y="0.500" width="3.500" height="5" fill="#000084"/></svg></div><div class="sep" style="left:58px"></div><div class="ic" style="left:64px"><svg width="16" height="16" viewBox="0 0 16 16" shape-rendering="geometricPrecision"><path d="M3 2.500l10.500 10.500" stroke="#000" stroke-width="1.100"/></svg></div><div class="ic" style="left:88px"><svg width="16" height="16" viewBox="0 0 16 16" shape-rendering="geometricPrecision"><path d="M2 2l3.500 6.500c2 2 8-1 6.500-4.500c-1.500-2.500-6-1.500-5.500 3c0.500 3 2 5 4.500 5" fill="none" stroke="#000" stroke-width="1.100"/></svg></div><div class="ic" style="left:111px"><svg width="16" height="16" viewBox="0 0 16 16" shape-rendering="geometricPrecision"><path d="M2.500 3l10 9.500v-10l-10 9.500" fill="none" stroke="#000" stroke-width="1.100"/></svg></div><div class="ic" style="left:134px"><svg width="16" height="16" viewBox="0 0 16 16" shape-rendering="geometricPrecision"><path d="M11 2.500c-5 1-5 9 0 10.500" fill="none" stroke="#000" stroke-width="1.500"/></svg></div><div class="ic" style="left:157px"><svg width="16" height="16" viewBox="0 0 16 16" shape-rendering="geometricPrecision"><path d="M5.500 1.500h5l3.500 3.500v5l-3.500 3.500h-5l-3.500-3.500v-5z" fill="none" stroke="#000" stroke-width="1.100"/></svg></div><div class="ic" style="left:180px"><svg width="16" height="16" viewBox="0 0 16 16" shape-rendering="geometricPrecision"><circle cx="7.500" cy="8.500" r="6" fill="#ECE9DC" stroke="#C8C5B5" stroke-width="1"/><path d="M8.500 1.500v6h5.500c0-3.500-2-6-5.500-6z" fill="#fff" stroke="#000" stroke-width="1"/></svg></div><div class="ic" style="left:203px"><svg width="16" height="16" viewBox="0 0 16 16" shape-rendering="geometricPrecision"><rect x="1.500" y="3.500" width="13" height="10" rx="1.500" fill="none" stroke="#000" stroke-width="1.100"/></svg></div><div class="ic" style="left:226px"><svg width="16" height="16" viewBox="0 0 16 16" shape-rendering="geometricPrecision"><path d="M1 5.500h4.500l2.500-3 2.500 3h4.500l-3 3 3 3h-4.500l-2.500 3-2.500-3h-4.500l3-3z" fill="none" stroke="#000" stroke-width="1.100"/></svg></div><div class="ic" style="left:248px"><svg width="16" height="16" viewBox="0 0 16 16" shape-rendering="crispEdges"><path d="M2.500 9v6M4.500 9v6M6.500 9v6M8.500 9v6M10.500 9v6M12.500 9v6M14.500 9v6" stroke="#000"/><path d="M1 8.500h15" stroke="#000" stroke-dasharray="2 1"/><path d="M8.500 1v5M4 3l2.500 3M13 3l-2.500 3M2 6.500h2M13 6.500h2" stroke="#000" shape-rendering="geometricPrecision"/></svg></div><div class="ic" style="left:271px"><svg width="16" height="16" viewBox="0 0 16 16" shape-rendering="geometricPrecision"><text x="-1" y="14" font-family="Liberation Sans,sans-serif" font-weight="bold" font-style="italic" font-size="16" fill="#000">A</text><path d="M11.500 2h2M12.500 2v12M11.500 14h3" stroke="#000" stroke-width="0.800"/><path d="M0 14.500h9" stroke="#000"/></svg></div><div class="ic" style="left:295px"><svg width="16" height="16" viewBox="0 0 16 16" shape-rendering="geometricPrecision"><rect x="1" y="3" width="14" height="10" fill="#000"/><rect x="2" y="4" width="12" height="8" fill="#18C0D8"/><path d="M2 12l0-5c2-3 5-2 4 1l-1 4z" fill="#107030"/><path d="M8 4h6v5c-3 0-5-2-6-5z" fill="#90E8F0"/><rect x="2" y="10" width="2" height="2" fill="#E8E8E8"/></svg></div><div class="ic" style="left:319px"><svg width="16" height="16" viewBox="0 0 16 16" shape-rendering="crispEdges"><path d="M2 14.500h12.500v-12.500" fill="none" stroke="#000" stroke-width="1.200"/><path d="M2 13.500h11.500v-11.500" fill="none" stroke="#fff" stroke-width="1"/></svg></div></div>
<div class="tb" style="left:0px;top:102px;width:862px"><div class="grip"></div><div class="ic" style="left:13px"><svg width="16" height="16" viewBox="0 0 16 16" shape-rendering="crispEdges"><rect x="1.500" y="1.500" width="6" height="6" fill="#B4B4A0" stroke="#000"/><rect x="8.500" y="8.500" width="6" height="6" fill="#B4B4A0" stroke="#000"/><rect x="4.500" y="4.500" width="7" height="7" fill="#FFFF9C" stroke="#000"/></svg></div><div class="ic" style="left:36px"><svg width="16" height="16" viewBox="0 0 16 16" shape-rendering="crispEdges"><rect x="4.500" y="4.500" width="7" height="7" fill="#FFFF9C" stroke="#000"/><rect x="1.500" y="1.500" width="6" height="6" fill="#B4B4A0" stroke="#000"/><rect x="8.500" y="8.500" width="6" height="6" fill="#B4B4A0" stroke="#000"/></svg></div><div class="ic" style="left:59px"><svg width="16" height="16" viewBox="0 0 16 16" shape-rendering="crispEdges"><rect x="5.500" y="6.500" width="9" height="7" fill="#B4B4A0" stroke="#000"/><rect x="1.500" y="2.500" width="9" height="8" fill="#FFFF9C" stroke="#000"/></svg></div><div class="ic" style="left:82px"><svg width="16" height="16" viewBox="0 0 16 16" shape-rendering="crispEdges"><rect x="1.500" y="2.500" width="9" height="8" fill="#FFFF9C" stroke="#000"/><rect x="5.500" y="6.500" width="9" height="7" fill="#B4B4A0" stroke="#000"/></svg></div><div class="sep" style="left:105px"></div><div class="ic" style="left:112px"><svg width="16" height="16" viewBox="0 0 16 16" shape-rendering="crispEdges"><rect x="1.500" y="8.500" width="12" height="6" fill="none" stroke="#000" stroke-dasharray="1 1"/><rect x="1.500" y="1.500" width="12" height="7" fill="#fff" stroke="#000" stroke-width="1.200"/><path d="M7.500 10v-7M5 5.500l2.500-2.500 2.500 2.500" stroke="#000" stroke-width="1.200" fill="none"/></svg></div><div class="ic" style="left:136px"><svg width="16" height="16" viewBox="0 0 16 16" shape-rendering="crispEdges"><rect x="1.500" y="1.500" width="12" height="6" fill="none" stroke="#000" stroke-dasharray="1 1"/><rect x="1.500" y="6.500" width="12" height="8" fill="#fff" stroke="#000" stroke-width="1.200"/><path d="M7.500 5v7M5 9.500l2.500 2.500 2.500-2.500" stroke="#000" stroke-width="1.200" fill="none"/></svg></div><div class="ic" style="left:159px"><svg width="16" height="16" viewBox="0 0 16 16" shape-rendering="crispEdges"><rect x="7.500" y="2.500" width="7" height="11" fill="none" stroke="#000" stroke-dasharray="1 1"/><rect x="1.500" y="2.500" width="7" height="11" fill="#fff" stroke="#000" stroke-width="1.200"/><path d="M11 8h-8M5.500 5.500l-2.500 2.500 2.500 2.500" stroke="#000" stroke-width="1.200" fill="none"/></svg></div><div class="ic" style="left:182px"><svg width="16" height="16" viewBox="0 0 16 16" shape-rendering="crispEdges"><rect x="1.500" y="2.500" width="7" height="11" fill="none" stroke="#000" stroke-dasharray="1 1"/><rect x="7.500" y="2.500" width="7" height="11" fill="#fff" stroke="#000" stroke-width="1.200"/><path d="M5 8h8M10.500 5.500l2.500 2.500-2.500 2.500" stroke="#000" stroke-width="1.200" fill="none"/></svg></div><div class="sep" style="left:206px"></div><div class="ic" style="left:213px"><svg width="16" height="16" viewBox="0 0 16 16" shape-rendering="crispEdges"><g stroke="#ACA899" fill="none" stroke-width="1"><path d="M2.500 1v14"/><rect x="4.500" y="3.500" width="7" height="3" fill="#D2CFC0"/><rect x="4.500" y="9.500" width="9" height="3" fill="#D2CFC0"/></g></svg></div><div class="ic" style="left:236px"><svg width="16" height="16" viewBox="0 0 16 16" shape-rendering="crispEdges"><g stroke="#ACA899" fill="none" stroke-width="1"><path d="M7.500 1v14"/><rect x="4.500" y="3.500" width="6" height="3" fill="#D2CFC0"/><rect x="2.500" y="9.500" width="10" height="3" fill="#D2CFC0"/></g></svg></div><div class="ic" style="left:259px"><svg width="16" height="16" viewBox="0 0 16 16" shape-rendering="crispEdges"><g stroke="#ACA899" fill="none" stroke-width="1"><path d="M13.500 1v14"/><rect x="5.500" y="3.500" width="6" height="3" fill="#D2CFC0"/><rect x="3.500" y="9.500" width="8" height="3" fill="#D2CFC0"/></g></svg></div><div class="ic" style="left:282px"><svg width="16" height="16" viewBox="0 0 16 16" shape-rendering="crispEdges"><g stroke="#ACA899" fill="none" stroke-width="1"><path d="M1 2.500h14"/><rect x="2.500" y="4.500" width="3" height="6" fill="#D2CFC0"/><rect x="7.500" y="4.500" width="3" height="9" fill="#D2CFC0"/><path d="M13.500 5v6"/></g></svg></div><div class="ic" style="left:305px"><svg width="16" height="16" viewBox="0 0 16 16" shape-rendering="crispEdges"><g stroke="#ACA899" fill="none" stroke-width="1"><path d="M0 8.500h16"/><rect x="3.500" y="5.500" width="3" height="6" fill="#D2CFC0"/><rect x="8.500" y="3.500" width="3" height="10" fill="#D2CFC0"/></g></svg></div><div class="ic" style="left:328px"><svg width="16" height="16" viewBox="0 0 16 16" shape-rendering="crispEdges"><g stroke="#ACA899" fill="none" stroke-width="1"><path d="M1 14.500h14"/><rect x="2.500" y="6.500" width="3" height="6" fill="#D2CFC0"/><rect x="7.500" y="3.500" width="3" height="9" fill="#D2CFC0"/><path d="M13.500 5v7"/></g></svg></div><div class="sep" style="left:351px"></div><div class="ic" style="left:358px"><svg width="16" height="16" viewBox="0 0 16 16" shape-rendering="geometricPrecision"><g stroke="#ACA899" fill="none" stroke-width="1"><path d="M1 2.500h2.500v11h-2.500M15 2.500h-2.500v11h2.500M5 8.500h6M7 6.500l-2 2 2 2M9 6.500l2 2-2 2"/></g></svg></div><div class="ic" style="left:382px"><svg width="16" height="16" viewBox="0 0 16 16" shape-rendering="geometricPrecision"><g stroke="#ACA899" fill="none" stroke-width="1"><path d="M2.500 0.500v2.500h11v-2.500M2.500 15.500v-2.500h11v2.500M8 4.500v7M6 6.500l2-2 2 2M6 9.500l2 2 2-2"/></g></svg></div><div class="sep" style="left:405px"></div><div class="ic" style="left:411px"><svg width="16" height="16" viewBox="0 0 16 16" shape-rendering="crispEdges"><g stroke="#ACA899" fill="none" stroke-width="1"><rect x="1.500" y="1.500" width="12" height="4" fill="#D2CFC0"/><path d="M1.500 7v6M13.500 7v6" stroke-dasharray="1 1"/><rect x="6" y="9" width="4" height="4" fill="#ACA899"/><path d="M2 11.500h3M11 11.500h3"/></g></svg></div><div class="ic" style="left:434px"><svg width="16" height="16" viewBox="0 0 16 16" shape-rendering="crispEdges"><g stroke="#ACA899" fill="none" stroke-width="1"><rect x="9.500" y="1.500" width="4" height="12" fill="#D2CFC0"/><path d="M2 1.500h6M2 14.500h6" stroke-dasharray="1 1"/><rect x="2" y="6" width="4" height="4" fill="#ACA899"/><path d="M4.500 2v3M4.500 11v3"/></g></svg></div><div class="ic" style="left:457px"><svg width="16" height="16" viewBox="0 0 16 16" shape-rendering="crispEdges"><g stroke="#ACA899" fill="none" stroke-width="1"><rect x="1.500" y="1.500" width="12" height="12" stroke-dasharray="3 3"/><rect x="5" y="5" width="5" height="5" fill="#ACA899"/><path d="M7.500 2v2M7.500 11v2M2 7.500h2M11 7.500h2"/></g></svg></div><div class="ic" style="left:480px"><svg width="16" height="16" viewBox="0 0 16 16" shape-rendering="crispEdges"><rect x="2" y="1" width="7" height="7" fill="#ACA899"/><rect x="8" y="1" width="6" height="4" fill="#ACA899"/><rect x="10" y="6" width="4" height="6" fill="#D2CFC0" stroke="#ACA899"/><rect x="2" y="9" width="7" height="6" fill="#ACA899"/></svg></div><div class="sep" style="left:505px"></div><div class="ic" style="left:513px"><svg width="16" height="16" viewBox="0 0 16 16" shape-rendering="geometricPrecision"><path d="M14 1.500v6h-12z" fill="#D2CFC0" stroke="#ACA899"/><path d="M14 14.500v-6h-12z" fill="#ACA899"/></svg></div><div class="ic" style="left:536px"><svg width="16" height="16" viewBox="0 0 16 16" shape-rendering="geometricPrecision"><path d="M7 2v12h-5z" fill="#ACA899"/><path d="M9 2v12h5z" fill="#D2CFC0" stroke="#ACA899"/></svg></div><div class="ic" style="left:559px"><svg width="16" height="16" viewBox="0 0 16 16" shape-rendering="geometricPrecision"><path d="M6 3v10h-4z" fill="#ACA899"/><path d="M7 13h8l-5-5z" fill="#D2CFC0" stroke="#ACA899"/><path d="M8 3c3 0 5 2 5 4" fill="none" stroke="#ACA899" stroke-dasharray="1.500 1"/></svg></div><div class="ic" style="left:582px"><svg width="16" height="16" viewBox="0 0 16 16" shape-rendering="crispEdges"><path d="M0 8.500h5" stroke="#000" stroke-width="1.300"/><path d="M5.500 3v11M5.500 4.500h2l1 1h4l1-1.500h1v9h-1l-1-1.500h-4l-1 1h-2" fill="#fff" stroke="#000" stroke-width="1.300"/></svg></div><div class="sep" style="left:605px"></div><div class="ic" style="left:612px"><svg width="16" height="16" viewBox="0 0 16 16" shape-rendering="crispEdges"><g stroke="#ACA899" fill="none" stroke-width="1"><rect x="2.500" y="2.500" width="8" height="8"/><rect x="6.500" y="6.500" width="7" height="7" fill="#D2CFC0"/><rect x="1" y="1" width="2.500" height="2.500" fill="#ACA899"/><rect x="12" y="1" width="2.500" height="2.500" fill="#ACA899"/><rect x="1" y="12" width="2.500" height="2.500" fill="#ACA899"/><rect x="12" y="12" width="2.500" height="2.500" fill="#ACA899"/></g></svg></div><div class="ic" style="left:635px"><svg width="16" height="16" viewBox="0 0 16 16" shape-rendering="crispEdges"><g stroke="#ACA899" fill="none" stroke-width="1"><rect x="2.500" y="2.500" width="7" height="7"/><rect x="6.500" y="6.500" width="7" height="7" fill="#D2CFC0"/><rect x="1" y="1" width="2.500" height="2.500" fill="#ACA899"/><rect x="8" y="1" width="2.500" height="2.500" fill="#ACA899"/><rect x="1" y="8" width="2.500" height="2.500" fill="#ACA899"/><rect x="12" y="5" width="2.500" height="2.500" fill="#ACA899"/><rect x="5" y="12" width="2.500" height="2.500" fill="#ACA899"/><rect x="12" y="12" width="2.500" height="2.500" fill="#ACA899"/></g></svg></div><div class="sep" style="left:659px"></div><div class="ic" style="left:667px"><svg width="16" height="16" viewBox="0 0 16 16" shape-rendering="geometricPrecision"><text x="-1" y="12" font-family="Liberation Sans,sans-serif" font-weight="bold" font-size="11" fill="#ACA899" stroke="#ACA899" stroke-width="0.300">Go</text></svg></div><div class="ic" style="left:690px"><svg width="16" height="16" viewBox="0 0 16 16" shape-rendering="crispEdges"><rect x="4" y="1" width="9" height="2" fill="#000084"/><rect x="4" y="4" width="9" height="2" fill="#000084"/><rect x="4" y="7" width="9" height="2" fill="#000084"/><path d="M4 10h9l-4.500 5z" fill="#000084" shape-rendering="geometricPrecision"/></svg></div><div class="cb" style="left:713px;width:145px;background:#fff;">100 %<div class="cbb"></div></div></div>
<div class="tb" style="left:0px;top:128px;width:173px"><div class="grip"></div><div class="ic" style="left:13px"><svg width="16" height="16" viewBox="0 0 16 16" shape-rendering="geometricPrecision"><path d="M7 0.500l3 2-2 3 3 1-2 3 2 1-3 4-2-2-2 2v-5l-2-1 3-3-2-2z" fill="#F0E020" stroke="#000" stroke-width="1"/><circle cx="9" cy="8" r="1.500" fill="#fff" stroke="#000" stroke-width="0.800"/></svg></div><div class="ic" style="left:36px"><svg width="16" height="16" viewBox="0 0 16 16" shape-rendering="crispEdges"><rect x="2.500" y="1.500" width="11" height="9" fill="#fff" stroke="#000" stroke-width="1.300"/><rect x="6" y="3" width="2.500" height="2.500" fill="#D01010"/><rect x="9" y="3" width="2.500" height="2.500" fill="#D01010"/><rect x="6" y="6" width="2.500" height="2.500" fill="#10A010"/><rect x="9" y="6" width="2.500" height="2.500" fill="#10A010"/><path d="M3.500 4h2M3.500 6h2M3.500 8h2" stroke="#000"/><path d="M0 12.500h16M0 14.500h16" stroke="#000" stroke-width="1.200"/></svg></div><div class="ic" style="left:59px"><svg width="16" height="16" viewBox="0 0 16 16" shape-rendering="geometricPrecision"><path d="M1 3.500h5M11 1v5" stroke="#000084" stroke-width="1.200"/><path d="M3.500 1.500l-2.500 2 2.500 2M9 4l2 2.500 2-2.500" fill="none" stroke="#000084" stroke-width="1.200"/><rect x="4.500" y="7.500" width="10" height="7" fill="#fff" stroke="#000" stroke-width="1.300"/><path d="M7 10h2M10 10h3M7 12.500h2M10 12.500h3" stroke="#000"/><circle cx="3.500" cy="10.500" r="2.500" fill="#fff" stroke="#000"/><path d="M3.500 9v1.500h1.500" stroke="#000" fill="none"/></svg></div><div class="ic" style="left:82px"><svg width="16" height="16" viewBox="0 0 16 16" shape-rendering="geometricPrecision"><rect x="1.500" y="2.500" width="11" height="11" rx="1" fill="#E8E0B0" stroke="#000" stroke-width="1.300"/><rect x="5" y="1" width="5" height="3" fill="#fff" stroke="#000"/><rect x="3" y="5" width="1.500" height="5" fill="#D01010"/><rect x="3" y="11" width="1.500" height="1.500" fill="#D01010"/><circle cx="10.500" cy="10.500" r="4" fill="#fff" stroke="#000" stroke-width="1.200"/><path d="M10.500 8v2.500h2" stroke="#000" fill="none"/></svg></div><div class="ic" style="left:105px"><svg width="16" height="16" viewBox="0 0 16 16" shape-rendering="geometricPrecision"><rect x="0.500" y="1.500" width="9" height="9" fill="#fff" stroke="#000084" stroke-width="1.200"/><rect x="0" y="1" width="10" height="2" fill="#000084"/><path d="M2 5h2M5 5h3M2 7h2M5 7h3M2 9h2" stroke="#000"/><rect x="6.500" y="6.500" width="6" height="8" fill="#fff" stroke="#000"/><path d="M8 9h3M8 11h3M8 13h3" stroke="#000"/><circle cx="12.500" cy="3.500" r="2.800" fill="#fff" stroke="#000"/><path d="M12.500 2v1.500h1" stroke="#000" fill="none"/><path d="M14.500 8v6M12.500 12l2 2.500 2-2.500" stroke="#000084" stroke-width="1.200" fill="none"/></svg></div><div class="ic" style="left:128px"><svg width="16" height="16" viewBox="0 0 16 16" shape-rendering="geometricPrecision"><path d="M3 7l6-6 6 6-2 6h-9z" fill="#E8E8E8" stroke="#000" stroke-width="1"/><path d="M5 7l4-4 4 4M6 8l3-3 3 3" stroke="#606060" fill="none"/><rect x="1.500" y="8.500" width="11" height="6" fill="#fff" stroke="#000" stroke-width="1.300"/><path d="M1.500 8.500l5.500 3.500 5.500-3.500" stroke="#000" fill="none"/></svg></div><div class="ic" style="left:151px"><svg width="16" height="16" viewBox="0 0 16 16" shape-rendering="crispEdges"><rect x="1.500" y="2.500" width="13" height="12" fill="#fff" stroke="#000084" stroke-width="1.200"/><rect x="1" y="2" width="14" height="3" fill="#000084"/><path d="M3 1v2M5 1v2M7 1v2M9 1v2M11 1v2M13 1v2" stroke="#000084"/><path d="M1.500 8.500h13M1.500 11.500h13M4.500 5v9M7.500 5v9M10.500 5v9" stroke="#8C8CB8"/><rect x="8" y="6" width="3" height="3" fill="#fff" stroke="#E01010" stroke-width="1.300"/></svg></div></div>
<div class="tb" style="left:175px;top:128px;width:331px"><div class="grip"></div><div class="ic" style="left:11px"><svg width="16" height="16" viewBox="0 0 16 16" shape-rendering="geometricPrecision"><path d="M8 1.500c-3.500 0-5.500 2.500-5.500 5c0 2 1.500 3 2.500 4.500h6c1-1.500 2.500-2.500 2.500-4.500c0-2.500-2-5-5.500-5z" fill="#F8F040" stroke="#888820" stroke-width="0.800"/><path d="M5.500 12h5M6 13.500h4M7 15h2" stroke="#000" stroke-width="1.200"/></svg></div><div class="ic" style="left:34px"><svg width="16" height="16" viewBox="0 0 16 16" shape-rendering="geometricPrecision"><rect x="6" y="1" width="8" height="14" fill="#000"/><rect x="7" y="2" width="6" height="12" fill="#108030"/><circle cx="10" cy="4" r="1.800" fill="#E01818"/><circle cx="10" cy="8" r="1.800" fill="#E8E020"/><circle cx="10" cy="12" r="1.800" fill="#20E020"/><path d="M2 4.500h3M1 8.500h4M2 12.500h3" stroke="#000"/></svg></div><div class="ic" style="left:57px"><svg width="16" height="16" viewBox="0 0 16 16" shape-rendering="crispEdges"><rect x="2" y="8" width="12" height="6" fill="#F6F5EE"/><path d="M14.500 8v6.500h-13" fill="none" stroke="#000"/><path d="M2.500 1v6M2.500 4.500h2M4.500 1v6M6 4.500h2.500M12 4.500h2M14.500 1v7" stroke="#000" stroke-width="1"/><circle cx="10.500" cy="4.500" r="2" fill="none" stroke="#000" stroke-width="1.200" shape-rendering="geometricPrecision"/></svg></div><div class="ic" style="left:80px"><svg width="16" height="16" viewBox="0 0 16 16" shape-rendering="geometricPrecision"><rect x="2" y="8" width="12" height="6" fill="#F6F5EE"/><path d="M14.500 8v6.500h-13" fill="none" stroke="#000" shape-rendering="crispEdges"/><text x="1" y="7.500" font-family="Liberation Sans,sans-serif" font-size="9.500" font-weight="bold" fill="#000" textLength="14" lengthAdjust="spacingAndGlyphs">123</text></svg></div><div class="ic" style="left:103px"><svg width="16" height="16" viewBox="0 0 16 16" shape-rendering="geometricPrecision"><path d="M1 6l4-5 5 4 5-1v6l-6 5-8-6z" fill="#18D030" stroke="#0A8A1A" stroke-width="1"/><path d="M1 6l8 5 6-6M9 11v4" stroke="#0A8A1A" fill="none"/></svg></div><div class="ic" style="left:126px"><svg width="16" height="16" viewBox="0 0 16 16" shape-rendering="crispEdges"><rect x="1.500" y="2.500" width="14" height="7" fill="#fff" stroke="#000" stroke-width="1.300"/><rect x="3" y="4" width="2" height="4" fill="#E8E020"/><rect x="6" y="4" width="2" height="4" fill="#18B030"/><rect x="9" y="4" width="2" height="4" fill="#1818D0"/><rect x="12" y="4" width="2" height="4" fill="#E01818"/><path d="M7 9l6 6M9 8l6 6M11 8l4 4M8 11l3 4" stroke="#000" shape-rendering="geometricPrecision"/></svg></div><div class="ic" style="left:149px"><svg width="16" height="16" viewBox="0 0 16 16" shape-rendering="crispEdges"><rect x="1.500" y="2.500" width="14" height="12" fill="#fff" stroke="#18688C" stroke-width="1.300"/><path d="M1.500 7.500h14" stroke="#18688C"/><path d="M10.500 2.500v5" stroke="#18688C"/><path d="M11.500 4h3l-1.500 2.500z" fill="#000"/><path d="M3 10h8M3 12h6" stroke="#8C8C8C"/></svg></div><div class="ic" style="left:172px"><svg width="16" height="16" viewBox="0 0 16 16" shape-rendering="crispEdges"><path d="M0 8.500h16" stroke="#000" stroke-width="1.300"/><rect x="3.500" y="3.500" width="4" height="10" rx="1.500" fill="#fff" stroke="#000" stroke-width="1.300" shape-rendering="geometricPrecision"/><path d="M15.500 6.500v4" stroke="#000"/></svg></div><div class="ic" style="left:195px"><svg width="16" height="16" viewBox="0 0 16 16" shape-rendering="geometricPrecision"><rect x="0" y="4" width="16" height="9" fill="#1040A0"/><text x="1" y="12" font-family="Liberation Sans,sans-serif" font-weight="bold" font-size="9.500" fill="#18E020" textLength="14" lengthAdjust="spacingAndGlyphs">999</text></svg></div><div class="ic" style="left:218px"><svg width="16" height="16" viewBox="0 0 16 16" shape-rendering="geometricPrecision"><rect x="0" y="0" width="16" height="9" fill="#1040A0"/><text x="1" y="8" font-family="Liberation Sans,sans-serif" font-weight="bold" font-size="9.500" fill="#18E020" textLength="14" lengthAdjust="spacingAndGlyphs">999</text><rect x="1" y="9" width="14" height="5" fill="#F6F5EE"/><path d="M15.500 9v5.500h-14" fill="none" stroke="#000" shape-rendering="crispEdges"/></svg></div><div class="ic" style="left:241px"><svg width="16" height="16" viewBox="0 0 16 16" shape-rendering="geometricPrecision"><rect x="0" y="4" width="16" height="9" fill="#000084"/><text x="1" y="12" font-family="Liberation Sans,sans-serif" font-weight="bold" font-size="9.500" fill="#30E8A0" textLength="14" lengthAdjust="spacingAndGlyphs">ABC</text></svg></div><div class="ic" style="left:264px"><svg width="16" height="16" viewBox="0 0 16 16" shape-rendering="geometricPrecision"><rect x="0" y="0" width="16" height="9" fill="#000084"/><text x="1" y="8" font-family="Liberation Sans,sans-serif" font-weight="bold" font-size="9.500" fill="#30E8A0" textLength="14" lengthAdjust="spacingAndGlyphs">ABC</text><rect x="1" y="9" width="14" height="5" fill="#F6F5EE"/><path d="M15.500 9v5.500h-14" fill="none" stroke="#000" shape-rendering="crispEdges"/></svg></div><div class="ic" style="left:287px"><svg width="16" height="16" viewBox="0 0 16 16" shape-rendering="crispEdges"><path d="M1.500 2v10.500" stroke="#fff"/><path d="M1 2.500h13" stroke="#fff"/><path d="M1 13.500h14v-12" fill="none" stroke="#000" stroke-width="1.200"/><rect x="2" y="3" width="12" height="10" fill="#F0EEE4"/><rect x="4" y="7" width="2" height="2" fill="#0000C0"/><text x="7.500" y="11.500" font-family="Liberation Sans,sans-serif" font-weight="bold" font-size="9" fill="#000">F</text></svg></div><div class="ic" style="left:310px"><svg width="16" height="16" viewBox="0 0 16 16" shape-rendering="geometricPrecision"><circle cx="8" cy="8" r="6.500" fill="#fff" stroke="#000" stroke-width="1.300"/><path d="M8 8l-2.500-3.500" stroke="#000" stroke-width="1"/><path d="M8 8v5" stroke="#D01010" stroke-width="1"/><path d="M8 2.500v1M8 12.500v1M2.500 8h1M12.500 8h1" stroke="#000"/></svg></div></div>
<div class="tb" style="left:508px;top:128px;width:402px"><div class="grip"></div><div class="ic" style="left:11px"><svg width="16" height="16" viewBox="0 0 16 16" shape-rendering="geometricPrecision"><rect x="5.500" y="3.500" width="10" height="6" fill="#F0E020" stroke="#000"/><rect x="1.500" y="0.500" width="11" height="7" fill="#1018B0" stroke="#000084"/><path d="M3 2.500h2M6 2.500h5M3 5h2M6 5h5" stroke="#fff"/><text x="3" y="16" font-family="Liberation Mono,monospace" font-weight="bold" font-size="7" fill="#000" letter-spacing="-0.300">123</text></svg></div><div class="ic" style="left:34px"><svg width="16" height="16" viewBox="0 0 16 16" shape-rendering="geometricPrecision"><rect x="5.500" y="3.500" width="10" height="6" fill="#F0E020" stroke="#000"/><rect x="1.500" y="0.500" width="11" height="7" fill="#1018B0" stroke="#000084"/><path d="M3 2.500h2M6 2.500h5M3 5h2M6 5h5" stroke="#fff"/><text x="3" y="16" font-family="Liberation Mono,monospace" font-weight="bold" font-size="7" fill="#000" letter-spacing="-0.300">HHM</text></svg></div><div class="ic" style="left:58px"><svg width="16" height="16" viewBox="0 0 16 16" shape-rendering="geometricPrecision"><rect x="4.500" y="4.500" width="7" height="7" fill="#30E0E0" stroke="#000"/><path d="M8 0l3 3.500h-6zM8 16l3-3.500h-6zM0 8l3.500-3v6zM16 8l-3.500-3v6z" fill="#000"/></svg></div><div class="ic" style="left:81px"><svg width="16" height="16" viewBox="0 0 16 16" shape-rendering="geometricPrecision"><rect x="1.500" y="1.500" width="5" height="5" fill="#30E0E0" stroke="#000"/><rect x="10.500" y="3.500" width="5" height="5" fill="#E01818" stroke="#000"/><rect x="5.500" y="10.500" width="5" height="5" fill="#F0E020" stroke="#000"/><path d="M6.500 4h4M4 6.500v6h1.500M13 8.500v4.500h-2.500" stroke="#000" fill="none"/><path d="M9 2.500l2 1.500-2 1.500z" fill="#000"/></svg></div><div class="ic" style="left:104px"><svg width="16" height="16" viewBox="0 0 16 16" shape-rendering="geometricPrecision"><path d="M1.500 1v13.500h14" stroke="#1018B0" stroke-width="1.300" fill="none"/><rect x="3.500" y="6.500" width="3" height="8" fill="#C01880" stroke="#000084" stroke-width="0.800"/><rect x="7.500" y="2.500" width="3" height="12" fill="#F0E020" stroke="#000084" stroke-width="0.800"/><rect x="11.500" y="4.500" width="3" height="10" fill="#30B0E0" stroke="#000084" stroke-width="0.800"/></svg></div><div class="ic" style="left:127px"><svg width="16" height="16" viewBox="0 0 16 16" shape-rendering="geometricPrecision"><circle cx="8" cy="8" r="6.800" fill="#fff" stroke="#000" stroke-width="1.300"/><path d="M3.500 7c0.500-2 2-3.500 4.500-3.500" stroke="#18A030" fill="none"/><path d="M8 3.500c2.500 0 4 1.500 4.500 3.500" stroke="#E01818" fill="none"/><path d="M8 9v-4" stroke="#000" stroke-width="1.500"/><rect x="7" y="8" width="2.500" height="2" fill="#000"/></svg></div><div class="ic" style="left:150px"><svg width="16" height="16" viewBox="0 0 16 16" shape-rendering="geometricPrecision"><path d="M2.500 0v14.500M0 13.500h16" stroke="#000" stroke-width="1.200"/><path d="M3 13l3-4 2 2 3-5 2 3 2-3" stroke="#000" fill="none"/><path d="M3 10l3-5 2 3 3-4 2 1 2-4" stroke="#E01818" fill="none"/><path d="M3 15.500h13M0.500 2h2M0.500 5h2M0.500 8h2M0.500 11h2" stroke="#000" stroke-dasharray="1 1"/></svg></div><div class="ic" style="left:173px"><svg width="16" height="16" viewBox="0 0 16 16" shape-rendering="crispEdges"><rect x="1.500" y="1.500" width="13" height="13" fill="#fff" stroke="#000" stroke-width="1.300"/><rect x="1" y="1" width="14" height="2.500" fill="#000"/><path d="M3 6h2M6 6h3M10 6h3M3 8.500h2M6 8.500h3M10 8.500h3M3 11h2M6 11h3M10 11h3M3 13h2M6 13h3M10 13h3" stroke="#A01818"/></svg></div><div class="ic" style="left:196px"><svg width="16" height="16" viewBox="0 0 16 16" shape-rendering="crispEdges"><rect x="0.500" y="0.500" width="15" height="15" fill="#C8C8F0" stroke="#1018B0" stroke-width="1.200"/><rect x="2.500" y="2.500" width="11" height="11" fill="#E8E8A0" stroke="#000" stroke-width="0.800"/><path d="M3 9l5-5 5 5v4h-10z" fill="#F0E020"/><path d="M3 9l5-5 5 5M3 12l5-4 5 4" stroke="#000" fill="none" shape-rendering="geometricPrecision"/></svg></div><div class="ic" style="left:219px"><svg width="16" height="16" viewBox="0 0 16 16" shape-rendering="crispEdges"><path d="M2.500 0v14.500M0 13.500h16" stroke="#000" stroke-width="1.200"/><path d="M3 15.500h13" stroke="#000" stroke-dasharray="1 1"/><path d="M0.500 2h2M0.500 5h2M0.500 8h2M0.500 11h2" stroke="#000"/><g fill="#1018D0"><rect x="4" y="10" width="2" height="2"/><rect x="6" y="6" width="2" height="2"/><rect x="8" y="3" width="2" height="2"/><rect x="9" y="8" width="2" height="2"/><rect x="11" y="6" width="2" height="2"/><rect x="12" y="10" width="2" height="2"/><rect x="14" y="8" width="2" height="2"/></g></svg></div><div class="ic" style="left:242px"><svg width="16" height="16" viewBox="0 0 16 16" shape-rendering="crispEdges"><rect x="1" y="5" width="15" height="6" fill="#1018A0"/><rect x="1.500" y="5.500" width="14" height="4.500" fill="#D81818"/><path d="M3 8h4M9 8h4" stroke="#F0E020" stroke-width="1.200"/><path d="M8 11v3" stroke="#fff"/></svg></div><div class="ic" style="left:265px"><svg width="16" height="16" viewBox="0 0 16 16" shape-rendering="geometricPrecision"><circle cx="6.500" cy="5.500" r="4.500" fill="#fff" stroke="#000" stroke-width="1.300"/><circle cx="6.500" cy="5.500" r="1.500" fill="none" stroke="#000"/><path d="M10 7l3-3" stroke="#000" stroke-width="1.500"/><circle cx="13.500" cy="3.500" r="1.500" fill="#000"/><path d="M2 12c0-2 9-2 9 0v1.500c0 2-9 2-9 0z" fill="#E01818" stroke="#800000" stroke-width="0.600"/></svg></div><div class="ic" style="left:288px"><svg width="16" height="16" viewBox="0 0 16 16" shape-rendering="crispEdges"><rect x="0.500" y="0.500" width="15" height="15" fill="#fff" stroke="#000" stroke-width="1.300"/><rect x="1" y="1" width="14" height="4" fill="#1E8A3C"/><path d="M2 6.500h2M5 6.500h3M2 9h2M5 9h3M9 9h2M2 11.500h2M5 11.500h3M9 11.500h2M12 11.500h2M2 13.500h2M5 13.500h3M9 13.500h2M12 13.500h2" stroke="#000"/><circle cx="12" cy="4.500" r="3.300" fill="#fff" stroke="#000" stroke-width="1" shape-rendering="geometricPrecision"/><path d="M12 2.500v2h2" stroke="#000" fill="none"/></svg></div><div class="ic" style="left:311px"><svg width="16" height="16" viewBox="0 0 16 16" shape-rendering="geometricPrecision"><path d="M1 2.500h5M12 0v5" stroke="#1018B0" stroke-width="1.200"/><path d="M3.500 0.500l-2.500 2 2.500 2M10 3l2 2.500 2-2.500" fill="none" stroke="#1018B0" stroke-width="1.200"/><path d="M4.500 4v2" stroke="#000"/><rect x="4.500" y="6.500" width="10" height="8" fill="#fff" stroke="#000" stroke-width="1.400"/><path d="M6 9.500h3M10 9.500h3M6 12h3M10 12h3" stroke="#000" stroke-width="1.200"/></svg></div><div class="ic" style="left:334px"><svg width="16" height="16" viewBox="0 0 16 16" shape-rendering="geometricPrecision"><path d="M1.500 3l2-2h5l1 1v10l-1 2h-7z" fill="#E4E2DA" stroke="#9C9A90"/><path d="M1.500 6.500h8M1.500 9.500h8" stroke="#9C9A90"/><rect x="3" y="11" width="1" height="1" fill="#D01010"/><path d="M11 11v-7M9 6l2-2.500 2 2.500" stroke="#000" stroke-width="1.300" fill="none"/><path d="M10.500 9.500h3l1.500 1.500v4.500h-4.500z" fill="#fff" stroke="#000"/></svg></div><div class="ic" style="left:357px"><svg width="16" height="16" viewBox="0 0 16 16" shape-rendering="crispEdges"><path d="M1 5l3-4 9 3v3" fill="#D2CFC0" stroke="#ACA899"/><rect x="1.500" y="6.500" width="13" height="8" fill="#D2CFC0" stroke="#ACA899" stroke-width="1.300"/><path d="M3 9h4M9 9h4M3 12h4M9 12h4" stroke="#ACA899" stroke-width="1.300"/></svg></div><div class="ic" style="left:380px"><svg width="16" height="16" viewBox="0 0 16 16" shape-rendering="crispEdges"><path d="M4.500 1v7M4.500 3.500h4" stroke="#ACA899"/><rect x="1.500" y="7.500" width="8" height="7" fill="#D2CFC0" stroke="#ACA899" stroke-width="1.300"/><rect x="7.500" y="2.500" width="8" height="8" fill="#D2CFC0" stroke="#ACA899" stroke-width="1.300"/><path d="M9 5h5M10 8h1M12 8h1" stroke="#ACA899"/></svg></div></div>
<div class="tb" style="left:0px;top:154px;width:299px"><div class="grip"></div><div class="chk" style="left:10px"></div><div class="tx" style="left:16px;top:5px;width:10px;text-align:center;font:bold 14px/16px 'Liberation Sans',sans-serif">0</div><div class="tx" style="left:39px;top:5px;width:10px;text-align:center;font:bold 14px/16px 'Liberation Sans',sans-serif">1</div><div class="tx" style="left:62px;top:5px;width:10px;text-align:center;font:bold 14px/16px 'Liberation Sans',sans-serif">2</div><div class="tx" style="left:85px;top:5px;width:10px;text-align:center;font:bold 14px/16px 'Liberation Sans',sans-serif">3</div><div class="ic" style="left:105px"><svg width="16" height="16" viewBox="0 0 16 16" shape-rendering="geometricPrecision"><path d="M11 2v12l-7-6z" fill="#000084"/></svg></div><div class="ic" style="left:128px"><svg width="16" height="16" viewBox="0 0 16 16" shape-rendering="geometricPrecision"><path d="M5 2v12l7-6z" fill="#000084"/></svg></div><div class="cb" style="left:151px;width:145px;background:#fff;">状态 0<div class="cbb"></div></div></div>
<div class="a" style="left:0;top:180px;width:249px;height:15px;background:linear-gradient(#C4C1B0,#D2CFC1 2px,#CFCCBD 12px,#C6C3B3)"></div>
<div class="tx" style="left:4px;top:182px;font-size:11px;color:#222">窗口</div>
<svg class="a" style="left:218px;top:183px" width="28" height="10" viewBox="0 0 28 10"><path d="M1 3h9l-4.5 5z" fill="#000"/><path d="M18.5 1.5l7 7m0-7l-7 7" stroke="#000" stroke-width="1.6" fill="none"/></svg>
<div class="a" style="left:0;top:195px;width:249px;height:27px;background:#F1F0EA"></div>
<div class="a" style="left:0;top:196px;width:249px;height:22px;background:#fff;border:1px solid #8FA9C4;border-left-color:#B8C8DA"></div>
<div class="tx" style="left:4px;top:202px;font-size:12px">窗口预览</div>
<div class="a xpdd" style="left:232px;top:199px"></div>
<div class="a" style="left:0;top:222px;width:233px;height:735px;background:#fff"></div>
<div class="li" style="top:222px;"><span class="n">0010</span><div class="th" style="background:#000"><svg width="75" height="55" viewBox="0 0 75 55" style="display:block"><rect x="0.6" y="0.8" width="11.1" height="4.7" fill="#fff" opacity="1"/><rect x="1.6" y="2" width="9.1" height="2.3" fill="#E09020" opacity="1"/><rect x="13" y="0.8" width="5.0" height="4.7" fill="#fff" opacity="1"/><rect x="14" y="2" width="3.0" height="2.3" fill="#E09020" opacity="1"/><rect x="23" y="0.8" width="5.0" height="4.7" fill="#fff" opacity="1"/><rect x="24" y="2" width="3.0" height="2.3" fill="#E09020" opacity="1"/><rect x="31" y="0.8" width="5.0" height="4.7" fill="#fff" opacity="1"/><rect x="32" y="2" width="3.0" height="2.3" fill="#E09020" opacity="1"/><rect x="40" y="0.8" width="4.5" height="4.7" fill="#fff" opacity="1"/><rect x="41" y="2" width="2.5" height="2.3" fill="#E09020" opacity="1"/><rect x="49" y="0.8" width="5.0" height="4.7" fill="#fff" opacity="1"/><rect x="50" y="2" width="3.0" height="2.3" fill="#E09020" opacity="1"/><rect x="66.5" y="0.8" width="3.0" height="4.7" fill="#fff" opacity="1"/><rect x="67.5" y="2" width="1.0" height="2.3" fill="#E09020" opacity="1"/><rect x="19.5" y="2.5" width="2.5" height="2.5" fill="#30A030" opacity="0.9"/><rect x="28.8" y="2.5" width="2.5" height="2.5" fill="#30A030" opacity="0.9"/><rect x="36.8" y="2.5" width="2.5" height="2.5" fill="#30A030" opacity="0.9"/><rect x="45.5" y="2.5" width="2.5" height="2.5" fill="#30A030" opacity="0.9"/><rect x="55" y="2.5" width="2.5" height="2.5" fill="#30A030" opacity="0.9"/><rect x="58" y="2.5" width="2.5" height="2.5" fill="#30A030" opacity="0.9"/><rect x="61.5" y="2.5" width="2.5" height="2.5" fill="#30A030" opacity="0.9"/><rect x="2.8" y="8.1" width="69.4" height="9.3" fill="none" stroke="#fff" stroke-width="1.2"/><text x="4.5" y="16" font-family="Liberation Sans,Noto Sans CJK SC,sans-serif" font-weight="bold" font-size="7.2" fill="#28C828" letter-spacing="0" opacity="1" textLength="66" lengthAdjust="spacingAndGlyphs">鼎城自动化设备有限公司</text><text x="17" y="21.2" font-family="Liberation Sans,sans-serif" font-weight="bold" font-size="2.6" fill="#E09020" letter-spacing="0" opacity="1" textLength="40" lengthAdjust="spacingAndGlyphs">DINGCHENG AUTOMATION CO., LTD</text><rect x="1.1" y="22.5" width="18.0" height="16.0" fill="none" stroke="#fff" stroke-width="1"/><text x="21" y="27" font-family="Liberation Sans,sans-serif" font-weight="bold" font-size="2.5" fill="#40C040" letter-spacing="0" opacity="1" textLength="36" lengthAdjust="spacingAndGlyphs">TEL: 0 577 6181 5111 5112</text><text x="21" y="31" font-family="Liberation Sans,sans-serif" font-weight="bold" font-size="2.5" fill="#40C040" letter-spacing="0" opacity="1" textLength="28" lengthAdjust="spacingAndGlyphs">FAX: 0 577 6181 5113</text><text x="21" y="35" font-family="Liberation Sans,sans-serif" font-weight="bold" font-size="2.5" fill="#40C040" letter-spacing="0" opacity="1" textLength="42" lengthAdjust="spacingAndGlyphs">ADD: NO.8 XIN GUANG ROAD LIU SHI</text><text x="21" y="38.2" font-family="Liberation Sans,sans-serif" font-weight="bold" font-size="2.5" fill="#40C040" letter-spacing="0" opacity="1" textLength="38" lengthAdjust="spacingAndGlyphs">YUE QING ZHE JIANG CHINA</text><text x="21" y="42" font-family="Liberation Sans,sans-serif" font-weight="bold" font-size="2.5" fill="#40C040" letter-spacing="0" opacity="1" textLength="48" lengthAdjust="spacingAndGlyphs">E-MAIL: dingcheng@dcauto.com.cn</text><text x="5" y="52.2" font-family="Liberation Sans,Noto Sans CJK SC,sans-serif" font-weight="bold" font-size="2.8" fill="#D02020" letter-spacing="0" opacity="1" textLength="13" lengthAdjust="spacingAndGlyphs">系统时间</text><text x="21" y="52.2" font-family="Liberation Sans,sans-serif" font-weight="bold" font-size="2.8" fill="#E8E020" letter-spacing="0" opacity="1" textLength="13" lengthAdjust="spacingAndGlyphs">hh:mm:ss</text><text x="47" y="52.2" font-family="Liberation Sans,Noto Sans CJK SC,sans-serif" font-weight="bold" font-size="2.8" fill="#D02020" letter-spacing="0" opacity="1" textLength="12" lengthAdjust="spacingAndGlyphs">系统日期</text><text x="63" y="52.2" font-family="Liberation Sans,sans-serif" font-weight="bold" font-size="2.8" fill="#E8E020" letter-spacing="0" opacity="1" textLength="6" lengthAdjust="spacingAndGlyphs">date</text></svg></div><span class="t">首页</span></div>
<div class="li" style="top:296px;"><span class="n">0011</span><div class="th" style="background:#0000FF"><svg width="75" height="55" viewBox="0 0 75 55" style="display:block"><rect x="0" y="0" width="75.0" height="1.0" fill="#101060" opacity="1"/><rect x="0.8" y="2.4" width="7.2" height="5.3" fill="none" stroke="#fff" stroke-width="1"/><rect x="64.5" y="2.4" width="7.8" height="5.3" fill="none" stroke="#fff" stroke-width="1"/><rect x="13" y="0.6" width="48.0" height="9.5" fill="#FF84F4" opacity="1"/><text x="17" y="8.2" font-family="Liberation Sans,Noto Sans CJK SC,sans-serif" font-weight="normal" font-size="6" fill="#E868C8" letter-spacing="0" opacity="1" textLength="40" lengthAdjust="spacingAndGlyphs">自动打螺丝机</text><text x="8.8" y="16.7" font-family="Liberation Sans,sans-serif" font-weight="normal" font-size="5.6" fill="#F4F4FF" letter-spacing="0" opacity="1" textLength="56" lengthAdjust="spacingAndGlyphs">ZI DONG DA LOO SI JI</text><text x="15.7" y="23.6" font-family="Liberation Sans,Noto Sans CJK SC,sans-serif" font-weight="bold" font-size="5" fill="#E018E0" letter-spacing="0" opacity="1" textLength="44" lengthAdjust="spacingAndGlyphs">请选择操作画面</text><rect x="17.5" y="26.4" width="18.0" height="15.4" fill="none" stroke="#fff" stroke-width="1"/><rect x="41.8" y="26.4" width="14.7" height="15.4" fill="none" stroke="#fff" stroke-width="1"/><text x="20.5" y="36" font-family="Liberation Sans,Noto Sans CJK SC,sans-serif" font-weight="bold" font-size="3.6" fill="#fff" letter-spacing="0" opacity="1" textLength="12" lengthAdjust="spacingAndGlyphs">手动画面</text><text x="44" y="35" font-family="Liberation Sans,Noto Sans CJK SC,sans-serif" font-weight="bold" font-size="3.6" fill="#fff" letter-spacing="0" opacity="1" textLength="11" lengthAdjust="spacingAndGlyphs">自动画面</text><text x="8" y="51" font-family="Liberation Sans,Noto Sans CJK SC,sans-serif" font-weight="bold" font-size="4.5" fill="#F4F4FF" letter-spacing="0" opacity="1" textLength="58" lengthAdjust="spacingAndGlyphs">欢迎使用鼎城自动化设备!</text></svg></div><span class="t">画面选折</span></div>
<div class="li" style="top:370px;"><span class="n">0012</span><div class="th" style="background:#7A94B8"><svg width="75" height="55" viewBox="0 0 75 55" style="display:block"><rect x="0" y="0" width="75.0" height="1.5" fill="#000" opacity="1"/><rect x="0" y="0" width="1.5" height="55.0" fill="#000" opacity="1"/><text x="19" y="6.2" font-family="Liberation Sans,Noto Sans CJK SC,sans-serif" font-weight="normal" font-size="4.2" fill="#4A5E8C" letter-spacing="0" opacity="1" textLength="35" lengthAdjust="spacingAndGlyphs">手动操作画面1</text><rect x="3.7" y="10.3" width="16.8" height="3.6" fill="none" stroke="#fff" stroke-width="1"/><rect x="4.7" y="11.3" width="14.3" height="1.6" fill="#6A7890" opacity="0.45"/><rect x="4.2" y="9.8" width="4.0" height="1.0" fill="#E84070" opacity="0.8"/><rect x="28.5" y="10.3" width="17.0" height="3.6" fill="none" stroke="#fff" stroke-width="1"/><rect x="29.5" y="11.3" width="14.5" height="1.6" fill="#6A7890" opacity="0.45"/><rect x="29" y="9.8" width="4.0" height="1.0" fill="#E84070" opacity="0.8"/><rect x="52.5" y="10.3" width="17.0" height="3.6" fill="none" stroke="#fff" stroke-width="1"/><rect x="53.5" y="11.3" width="14.5" height="1.6" fill="#6A7890" opacity="0.45"/><rect x="53" y="9.8" width="4.0" height="1.0" fill="#E84070" opacity="0.8"/><rect x="3.7" y="18.8" width="16.8" height="4.0" fill="none" stroke="#fff" stroke-width="1"/><rect x="4.7" y="19.8" width="14.3" height="2.0" fill="#6A7890" opacity="0.45"/><rect x="4.2" y="18.3" width="4.0" height="1.0" fill="#E84070" opacity="0.8"/><rect x="28.5" y="18.8" width="17.0" height="4.0" fill="none" stroke="#fff" stroke-width="1"/><rect x="29.5" y="19.8" width="14.5" height="2.0" fill="#6A7890" opacity="0.45"/><rect x="29" y="18.3" width="4.0" height="1.0" fill="#E84070" opacity="0.8"/><rect x="52.5" y="18.8" width="17.0" height="4.0" fill="none" stroke="#fff" stroke-width="1"/><rect x="53.5" y="19.8" width="14.5" height="2.0" fill="#6A7890" opacity="0.45"/><rect x="53" y="18.3" width="4.0" height="1.0" fill="#E84070" opacity="0.8"/><rect x="3.7" y="28.0" width="16.8" height="3.6" fill="none" stroke="#fff" stroke-width="1"/><rect x="4.7" y="29.0" width="14.3" height="1.6" fill="#6A7890" opacity="0.45"/><rect x="4.2" y="27.5" width="4.0" height="1.0" fill="#E84070" opacity="0.8"/><rect x="28.5" y="28.0" width="17.0" height="3.6" fill="none" stroke="#fff" stroke-width="1"/><rect x="29.5" y="29.0" width="14.5" height="1.6" fill="#6A7890" opacity="0.45"/><rect x="29" y="27.5" width="4.0" height="1.0" fill="#E84070" opacity="0.8"/><rect x="52.5" y="28.0" width="17.0" height="3.6" fill="none" stroke="#fff" stroke-width="1"/><rect x="53.5" y="29.0" width="14.5" height="1.6" fill="#6A7890" opacity="0.45"/><rect x="53" y="27.5" width="4.0" height="1.0" fill="#E84070" opacity="0.8"/><rect x="3.7" y="37.9" width="16.8" height="3.9" fill="none" stroke="#fff" stroke-width="1"/><rect x="4.7" y="38.9" width="14.3" height="1.9" fill="#6A7890" opacity="0.45"/><rect x="4.2" y="37.4" width="4.0" height="1.0" fill="#E84070" opacity="0.8"/><rect x="28.5" y="37.9" width="17.0" height="3.9" fill="none" stroke="#fff" stroke-width="1"/><rect x="29.5" y="38.9" width="14.5" height="1.9" fill="#6A7890" opacity="0.45"/><rect x="29" y="37.4" width="4.0" height="1.0" fill="#E84070" opacity="0.8"/><rect x="52.5" y="37.9" width="17.0" height="3.9" fill="none" stroke="#fff" stroke-width="1"/><rect x="53.5" y="38.9" width="14.5" height="1.9" fill="#6A7890" opacity="0.45"/><rect x="53" y="37.4" width="4.0" height="1.0" fill="#E84070" opacity="0.8"/><rect x="3.7" y="43.8" width="16.8" height="3.9" fill="none" stroke="#fff" stroke-width="1"/><rect x="4.7" y="44.8" width="14.3" height="1.9" fill="#6A7890" opacity="0.45"/><rect x="4.2" y="43.3" width="4.0" height="1.0" fill="#E84070" opacity="0.8"/><rect x="28.5" y="43.8" width="17.0" height="3.9" fill="none" stroke="#fff" stroke-width="1"/><rect x="29.5" y="44.8" width="14.5" height="1.9" fill="#6A7890" opacity="0.45"/><rect x="29" y="43.3" width="4.0" height="1.0" fill="#E84070" opacity="0.8"/><rect x="52.5" y="43.8" width="17.0" height="3.9" fill="none" stroke="#fff" stroke-width="1"/><rect x="53.5" y="44.8" width="14.5" height="1.9" fill="#6A7890" opacity="0.45"/><rect x="53" y="43.3" width="4.0" height="1.0" fill="#E84070" opacity="0.8"/></svg></div><span class="t">手动画面1</span></div>
<div class="li" style="top:444px;"><span class="n">0013</span><div class="th" style="background:#40E0D0"><svg width="75" height="55" viewBox="0 0 75 55" style="display:block"><rect x="0" y="19.6" width="75.0" height="10.9" fill="#F2EEEE" opacity="1"/><rect x="0" y="21" width="1.5" height="8.0" fill="#000" opacity="1"/><text x="3.5" y="26.8" font-family="Liberation Sans,Noto Sans CJK SC,sans-serif" font-weight="bold" font-size="4.5" fill="#E84060" letter-spacing="0" opacity="1" textLength="9" lengthAdjust="spacingAndGlyphs">产量:</text><rect x="4" y="32.4" width="71.0" height="6.6" fill="#54D8C8" opacity="0.8"/><rect x="0" y="0.3" width="2.0" height="2.2" fill="#3060E0" opacity="1"/><rect x="3.5" y="0.3" width="2.0" height="2.2" fill="#000" opacity="1"/><rect x="7" y="0.3" width="2.0" height="2.2" fill="#000" opacity="1"/><rect x="9.5" y="0.3" width="2.5" height="2.2" fill="#E8A0A0" opacity="1"/><rect x="16.6" y="3.2" width="43.8" height="7.6" fill="#FFD700" stroke="#102080" stroke-width="1.2"/><text x="19.5" y="9.8" font-family="Liberation Sans,Noto Sans CJK SC,sans-serif" font-weight="bold" font-size="6" fill="#E07010" letter-spacing="0" opacity="1" textLength="38" lengthAdjust="spacingAndGlyphs">自动运行状态</text><rect x="0.8" y="6.0" width="7.2" height="5.5" fill="none" stroke="#fff" stroke-width="1"/><rect x="65.5" y="5.0" width="7.4" height="5.5" fill="none" stroke="#fff" stroke-width="1"/><text x="10" y="17" font-family="Liberation Sans,Noto Sans CJK SC,sans-serif" font-weight="bold" font-size="3.4" fill="#20A080" letter-spacing="0" opacity="1" textLength="15" lengthAdjust="spacingAndGlyphs">运行次数</text><rect x="28.5" y="14.5" width="12.0" height="2.3" fill="#4060F0" stroke="#1030E0" stroke-width="1"/><rect x="44.5" y="13.5" width="6.8" height="3.3" fill="none" stroke="#fff" stroke-width="1"/><rect x="61.1" y="13.5" width="10.8" height="4.0" fill="none" stroke="#fff" stroke-width="1"/><rect x="2.7" y="35.5" width="14.4" height="12.0" fill="none" stroke="#F4FFFF" stroke-width="1"/><rect x="5.7" y="42" width="7.5" height="3.0" fill="#209898" opacity="0.5"/><rect x="20.8" y="35.5" width="14.4" height="12.0" fill="none" stroke="#F4FFFF" stroke-width="1"/><rect x="23.8" y="42" width="7.5" height="3.0" fill="#209898" opacity="0.5"/><rect x="38.5" y="35.5" width="13.7" height="12.0" fill="none" stroke="#F4FFFF" stroke-width="1"/><rect x="41.5" y="42" width="7.5" height="3.0" fill="#209898" opacity="0.5"/><rect x="56.5" y="35.5" width="13.8" height="12.0" fill="none" stroke="#F4FFFF" stroke-width="1"/><rect x="59.5" y="42" width="7.5" height="3.0" fill="#209898" opacity="0.5"/></svg></div><span class="t">自动画面</span></div>
<div class="li" style="top:518px;"><span class="n">0014</span><div class="th" style="background:#3C8C8C"><svg width="75" height="55" viewBox="0 0 75 55" style="display:block"><rect x="21.8" y="2.4" width="34.4" height="9.2" fill="none" stroke="#F0FFFF" stroke-width="1"/><text x="28" y="9.3" font-family="Liberation Sans,Noto Sans CJK SC,sans-serif" font-weight="normal" font-size="5" fill="#2A7474" letter-spacing="0" opacity="1" textLength="22" lengthAdjust="spacingAndGlyphs">设定画面</text><rect x="27.7" y="15.5" width="8.5" height="4.3" fill="none" stroke="#F0FFFF" stroke-width="1"/><rect x="28.7" y="16.3" width="6.5" height="2.7" fill="#C02860" opacity="0.75"/><rect x="3" y="16.65" width="22.0" height="2.0" fill="#1E6464" opacity="0.55"/><rect x="64.7" y="15.5" width="7.6" height="4.3" fill="none" stroke="#F0FFFF" stroke-width="1"/><rect x="65.7" y="16.3" width="5.6" height="2.7" fill="#C02860" opacity="0.75"/><rect x="39" y="16.65" width="22.0" height="2.0" fill="#1E6464" opacity="0.55"/><rect x="27.7" y="23.5" width="8.5" height="3.2" fill="none" stroke="#F0FFFF" stroke-width="1"/><rect x="28.7" y="24.3" width="6.5" height="1.6" fill="#C02860" opacity="0.75"/><rect x="3" y="24.1" width="22.0" height="2.0" fill="#1E6464" opacity="0.55"/><rect x="64.7" y="23.5" width="7.6" height="3.2" fill="none" stroke="#F0FFFF" stroke-width="1"/><rect x="65.7" y="24.3" width="5.6" height="1.6" fill="#C02860" opacity="0.75"/><rect x="39" y="24.1" width="22.0" height="2.0" fill="#1E6464" opacity="0.55"/><rect x="27.7" y="30.3" width="8.5" height="2.6" fill="none" stroke="#F0FFFF" stroke-width="1"/><rect x="28.7" y="31.1" width="6.5" height="1.0" fill="#C02860" opacity="0.75"/><rect x="3" y="30.6" width="22.0" height="2.0" fill="#1E6464" opacity="0.55"/><rect x="64.7" y="30.3" width="7.6" height="2.6" fill="none" stroke="#F0FFFF" stroke-width="1"/><rect x="65.7" y="31.1" width="5.6" height="1.0" fill="#C02860" opacity="0.75"/><rect x="39" y="30.6" width="22.0" height="2.0" fill="#1E6464" opacity="0.55"/><rect x="27.7" y="36.2" width="8.5" height="2.6" fill="none" stroke="#F0FFFF" stroke-width="1"/><rect x="28.7" y="37.0" width="6.5" height="1.0" fill="#C02860" opacity="0.75"/><rect x="3" y="36.5" width="22.0" height="2.0" fill="#1E6464" opacity="0.55"/><rect x="64.7" y="36.2" width="7.6" height="2.6" fill="none" stroke="#F0FFFF" stroke-width="1"/><rect x="65.7" y="37.0" width="5.6" height="1.0" fill="#C02860" opacity="0.75"/><rect x="39" y="36.5" width="22.0" height="2.0" fill="#1E6464" opacity="0.55"/><rect x="6.7" y="43.5" width="15.7" height="4.2" fill="none" stroke="#F0FFFF" stroke-width="1"/><rect x="8.2" y="44.5" width="12.7" height="2.3" fill="#2A7070" opacity="0.5"/><rect x="29.5" y="43.5" width="16.9" height="4.2" fill="none" stroke="#F0FFFF" stroke-width="1"/><rect x="31" y="44.5" width="13.9" height="2.3" fill="#2A7070" opacity="0.5"/><rect x="53.5" y="43.5" width="16.8" height="4.2" fill="none" stroke="#F0FFFF" stroke-width="1"/><rect x="55" y="44.5" width="13.8" height="2.3" fill="#2A7070" opacity="0.5"/></svg></div><span class="t">设定画面</span></div>
<div class="li" style="top:592px;"><span class="n">0015</span><div class="th" style="background:#6B8290"><svg width="75" height="55" viewBox="0 0 75 55" style="display:block"><rect x="0" y="0" width="75.0" height="1.5" fill="#000" opacity="1"/><rect x="0" y="0" width="1.5" height="55.0" fill="#000" opacity="1"/><text x="17" y="6.2" font-family="Liberation Sans,Noto Sans CJK SC,sans-serif" font-weight="normal" font-size="4.2" fill="#4A6878" letter-spacing="0" opacity="1" textLength="37" lengthAdjust="spacingAndGlyphs">手动操作画面2</text><rect x="4.4" y="12.3" width="18.0" height="4.6" fill="none" stroke="#fff" stroke-width="1"/><rect x="5.4" y="13.3" width="15.5" height="2.6" fill="#55606C" opacity="0.45"/><rect x="4.9" y="11.8" width="4.0" height="1.0" fill="#E84070" opacity="0.8"/><rect x="28.7" y="12.3" width="16.7" height="4.6" fill="none" stroke="#fff" stroke-width="1"/><rect x="29.7" y="13.3" width="14.2" height="2.6" fill="#55606C" opacity="0.45"/><rect x="29.2" y="11.8" width="4.0" height="1.0" fill="#E84070" opacity="0.8"/><rect x="51.5" y="12.3" width="17.0" height="4.6" fill="none" stroke="#fff" stroke-width="1"/><rect x="52.5" y="13.3" width="14.5" height="2.6" fill="#55606C" opacity="0.45"/><rect x="52" y="11.8" width="4.0" height="1.0" fill="#E84070" opacity="0.8"/><rect x="4.4" y="25.4" width="19.0" height="4.6" fill="none" stroke="#fff" stroke-width="1"/><rect x="5.4" y="26.4" width="16.5" height="2.6" fill="#55606C" opacity="0.45"/><rect x="4.9" y="24.9" width="4.0" height="1.0" fill="#E84070" opacity="0.8"/><rect x="30.5" y="25.4" width="27.0" height="4.6" fill="none" stroke="#fff" stroke-width="1"/><rect x="31.5" y="26.4" width="24.5" height="2.6" fill="#55606C" opacity="0.45"/><rect x="31" y="24.9" width="4.0" height="1.0" fill="#E84070" opacity="0.8"/><rect x="4.4" y="43.5" width="17.0" height="4.5" fill="none" stroke="#fff" stroke-width="1"/><rect x="5.4" y="44.5" width="14.5" height="2.5" fill="#55606C" opacity="0.45"/><rect x="4.9" y="43" width="4.0" height="1.0" fill="#E84070" opacity="0.8"/><rect x="28.5" y="43.5" width="17.0" height="4.5" fill="none" stroke="#fff" stroke-width="1"/><rect x="29.5" y="44.5" width="14.5" height="2.5" fill="#55606C" opacity="0.45"/><rect x="29" y="43" width="4.0" height="1.0" fill="#E84070" opacity="0.8"/><rect x="52.5" y="43.5" width="16.0" height="4.5" fill="none" stroke="#fff" stroke-width="1"/><rect x="53.5" y="44.5" width="13.5" height="2.5" fill="#55606C" opacity="0.45"/><rect x="53" y="43" width="4.0" height="1.0" fill="#E84070" opacity="0.8"/></svg></div><span class="t">手动画面2</span></div>
<div class="li" style="top:666px;"><span class="n">0020</span><div class="th" style="background:#8C8C00"><svg width="75" height="55" viewBox="0 0 75 55" style="display:block"><rect x="0" y="0" width="75.0" height="1.5" fill="#000" opacity="1"/><rect x="0" y="0" width="1.5" height="55.0" fill="#000" opacity="1"/><text x="21.3" y="6.2" font-family="Liberation Sans,Noto Sans CJK SC,sans-serif" font-weight="bold" font-size="4" fill="#88F020" letter-spacing="0" opacity="1" textLength="31.7" lengthAdjust="spacingAndGlyphs">故障查询画面</text><rect x="0.9" y="8.3" width="25.4" height="5.5" fill="none" stroke="#FFFF90" stroke-width="1.1"/><rect x="4.3" y="9.4" width="16.5" height="3.4" fill="#7878C8" opacity="0.7"/><rect x="1.3" y="7.8" width="3.0" height="1.2" fill="#E86020" opacity="0.9"/><rect x="0.9" y="18.6" width="25.4" height="4.2" fill="none" stroke="#FFFF90" stroke-width="1.1"/><rect x="4.3" y="19.6" width="16.5" height="2.1" fill="#7878C8" opacity="0.7"/><rect x="1.3" y="18" width="3.0" height="1.2" fill="#E86020" opacity="0.9"/><rect x="2.2" y="28.4" width="24.1" height="4.4" fill="none" stroke="#FFFF90" stroke-width="1.1"/><rect x="5.6" y="29.5" width="15.2" height="2.3" fill="#7878C8" opacity="0.7"/><rect x="2.6" y="27.9" width="3.0" height="1.2" fill="#E86020" opacity="0.9"/><rect x="2.2" y="37.2" width="24.1" height="4.5" fill="none" stroke="#FFFF90" stroke-width="1.1"/><rect x="5.6" y="38.300000000000004" width="15.2" height="2.4" fill="#7878C8" opacity="0.7"/><rect x="2.6" y="36.7" width="3.0" height="1.2" fill="#E86020" opacity="0.9"/><rect x="0.9" y="44.4" width="27.4" height="3.5" fill="none" stroke="#FFFF90" stroke-width="1.1"/><rect x="4.3" y="45.5" width="18.5" height="1.4" fill="#7878C8" opacity="0.7"/><rect x="1.3" y="43.9" width="3.0" height="1.2" fill="#E86020" opacity="0.9"/><rect x="30.6" y="8.3" width="25.6" height="5.5" fill="none" stroke="#FFFF90" stroke-width="1.1"/><rect x="34" y="9.4" width="16.7" height="3.4" fill="#7878C8" opacity="0.7"/><rect x="31" y="7.8" width="3.0" height="1.2" fill="#E86020" opacity="0.9"/><rect x="30.6" y="19.2" width="24.9" height="3.5" fill="none" stroke="#FFFF90" stroke-width="1.1"/><rect x="34" y="20.3" width="16.0" height="1.4" fill="#7878C8" opacity="0.7"/><rect x="31" y="18.7" width="3.0" height="1.2" fill="#E86020" opacity="0.9"/><rect x="31.6" y="28.4" width="24.6" height="4.4" fill="none" stroke="#FFFF90" stroke-width="1.1"/><rect x="35" y="29.5" width="15.7" height="2.3" fill="#7878C8" opacity="0.7"/><rect x="32" y="27.9" width="3.0" height="1.2" fill="#E86020" opacity="0.9"/><rect x="31.6" y="36.2" width="24.6" height="4.5" fill="none" stroke="#FFFF90" stroke-width="1.1"/><rect x="35" y="37.300000000000004" width="15.7" height="2.4" fill="#7878C8" opacity="0.7"/><rect x="32" y="35.7" width="3.0" height="1.2" fill="#E86020" opacity="0.9"/><rect x="32.5" y="44.4" width="24.9" height="3.5" fill="none" stroke="#FFFF90" stroke-width="1.1"/><rect x="36" y="45.5" width="16.0" height="1.4" fill="#7878C8" opacity="0.7"/><rect x="33" y="43.9" width="3.0" height="1.2" fill="#E86020" opacity="0.9"/><rect x="58.5" y="9.4" width="14.9" height="3.5" fill="none" stroke="#FFFF90" stroke-width="1.1"/><rect x="60" y="10.100000000000001" width="3.5" height="2.0" fill="#D07020" opacity="0.85"/><rect x="65" y="10.3" width="7.0" height="1.6" fill="#A09820" opacity="0.7"/><rect x="57.5" y="18.6" width="15.9" height="4.2" fill="none" stroke="#FFFF90" stroke-width="1.1"/><rect x="59" y="19.3" width="3.5" height="2.7" fill="#D07020" opacity="0.85"/><rect x="64" y="19.5" width="8.0" height="2.3" fill="#A09820" opacity="0.7"/><rect x="58.5" y="28.4" width="15.9" height="4.4" fill="none" stroke="#FFFF90" stroke-width="1.1"/><rect x="60" y="29.2" width="3.5" height="2.9" fill="#D07020" opacity="0.85"/><rect x="65" y="29.4" width="8.0" height="2.5" fill="#A09820" opacity="0.7"/><rect x="58.5" y="37.2" width="14.9" height="2.5" fill="none" stroke="#FFFF90" stroke-width="1.1"/><rect x="60" y="38.0" width="3.5" height="1.0" fill="#D07020" opacity="0.85"/><rect x="65" y="38.2" width="7.0" height="0.6" fill="#A09820" opacity="0.7"/></svg></div><span class="t">故障查询1</span></div>
<div class="li" style="top:740px;"><span class="n">0021</span><div class="th" style="background:#8C8C00"><svg width="75" height="55" viewBox="0 0 75 55" style="display:block"><rect x="0" y="0" width="75.0" height="1.5" fill="#000" opacity="1"/><rect x="0" y="0" width="1.5" height="55.0" fill="#000" opacity="1"/><text x="20" y="6.2" font-family="Liberation Sans,Noto Sans CJK SC,sans-serif" font-weight="bold" font-size="4" fill="#88F020" letter-spacing="0" opacity="1" textLength="32" lengthAdjust="spacingAndGlyphs">故障查询画面</text><rect x="0.9" y="10.4" width="21.5" height="4.5" fill="none" stroke="#FFFF90" stroke-width="1.1"/><rect x="4.3" y="11.4" width="12.6" height="2.4" fill="#7878C8" opacity="0.7"/><rect x="1.3" y="9.8" width="3.0" height="1.2" fill="#E86020" opacity="0.9"/><rect x="27.8" y="10.4" width="27.4" height="3.5" fill="none" stroke="#FFFF90" stroke-width="1.1"/><rect x="31.2" y="11.4" width="18.5" height="1.4" fill="#7878C8" opacity="0.7"/><rect x="28.2" y="9.8" width="3.0" height="1.2" fill="#E86020" opacity="0.9"/><rect x="58.5" y="9.4" width="14.9" height="3.5" fill="none" stroke="#FFFF90" stroke-width="1.1"/><rect x="60" y="10.100000000000001" width="3.5" height="2.0" fill="#D07020" opacity="0.85"/><rect x="65" y="10.3" width="7.0" height="1.6" fill="#A09820" opacity="0.7"/><rect x="0.9" y="20.6" width="23.5" height="4.1" fill="none" stroke="#FFFF90" stroke-width="1.1"/><rect x="4.3" y="21.6" width="14.6" height="2.0" fill="#7878C8" opacity="0.7"/><rect x="1.3" y="20" width="3.0" height="1.2" fill="#E86020" opacity="0.9"/><rect x="57.5" y="18.6" width="15.9" height="4.2" fill="none" stroke="#FFFF90" stroke-width="1.1"/><rect x="59" y="19.3" width="3.5" height="2.7" fill="#D07020" opacity="0.85"/><rect x="64" y="19.5" width="8.0" height="2.3" fill="#A09820" opacity="0.7"/><rect x="58.5" y="28.4" width="15.9" height="4.4" fill="none" stroke="#FFFF90" stroke-width="1.1"/><rect x="60" y="29.2" width="3.5" height="2.9" fill="#D07020" opacity="0.85"/><rect x="65" y="29.4" width="8.0" height="2.5" fill="#A09820" opacity="0.7"/><rect x="57.5" y="37.2" width="15.9" height="4.5" fill="none" stroke="#FFFF90" stroke-width="1.1"/><rect x="59" y="38.0" width="3.5" height="3.0" fill="#D07020" opacity="0.85"/><rect x="64" y="38.2" width="8.0" height="2.6" fill="#A09820" opacity="0.7"/></svg></div><span class="t">故障查询2</span></div>
<div class="li" style="top:814px;background:#316AC5;color:#fff;outline:1px dotted #9DB9EB;outline-offset:-1px;"><span class="n">0022</span><div class="th" style="background:#F0F0F0"><svg width="75" height="55" viewBox="0 0 75 55" style="display:block"><rect x="0" y="0" width="75.0" height="55.0" fill="#6B808C" opacity="1"/><rect x="0" y="0" width="75.0" height="43.0" fill="#6A6ACA" opacity="1"/><rect x="1.8" y="1.6" width="68.2" height="40.2" fill="#F0F0F0" opacity="1"/><rect x="70" y="1.6" width="3.5" height="40.2" fill="#E4E4E4" opacity="1"/><rect x="73.5" y="1" width="1.5" height="42.0" fill="#F4F4FF" opacity="1"/><path d="M2 3.600H69" stroke="#9060D8" stroke-width="1" stroke-dasharray="2.500 1.500"/><rect x="1" y="0.5" width="3.0" height="1.5" fill="#E84070" opacity="1"/><rect x="19" y="2" width="2.5" height="2.2" fill="#E040A0" opacity="1"/><rect x="19.5" y="7" width="2.0" height="2.5" fill="#E8E040" opacity="1"/><rect x="19.5" y="11.5" width="2.0" height="2.5" fill="#30A030" opacity="1"/><rect x="3" y="7.3" width="11.0" height="1.5" fill="#E8E890" opacity="0.9"/><rect x="3" y="11.8" width="13.0" height="1.7" fill="#90C890" opacity="0.9"/><rect x="3" y="3" width="11.0" height="1.5" fill="#E89090" opacity="0.8"/><rect x="70" y="1.6" width="4.5" height="3.4" fill="#000" opacity="1"/><rect x="71" y="2.5" width="2.0" height="1.5" fill="#fff" opacity="1"/><rect x="70" y="39" width="4.5" height="3.0" fill="#000" opacity="1"/><rect x="71" y="40" width="2.0" height="1.0" fill="#fff" opacity="1"/><rect x="1.9" y="42.9" width="27.6" height="5.0" fill="none" stroke="#F8FCFC" stroke-width="1"/><rect x="3" y="44" width="15.0" height="2.5" fill="#3A4A60" opacity="0.6"/><path d="M74.500 44v10.500h-74" stroke="#A8B8C0" fill="none"/></svg></div><span class="t">报警画面</span></div>
<div class="li" style="top:888px;"><span class="n">0050</span><div class="th" style="left:31px;top:5px;width:47px;height:50px;background:#D4D4D4"><svg width="47" height="50" viewBox="0 0 47 50" style="display:block"><rect x="0" y="0" width="47.0" height="50.0" fill="#D4D4D4" opacity="1"/><rect x="0" y="0.8" width="9.0" height="2.5" fill="#C8A8D8" opacity="0.9"/><rect x="9.5" y="0.8" width="8.5" height="2.5" fill="#E060A0" opacity="0.7"/><rect x="20" y="0.8" width="9.0" height="2.5" fill="#C8A8D8" opacity="0.9"/><rect x="29.5" y="0.8" width="7.5" height="2.5" fill="#E060A0" opacity="0.7"/><rect x="0.7" y="5.2" width="37.7" height="5.1" fill="#fff" stroke="#000" stroke-width="1.3"/><text x="10" y="9.8" font-family="Liberation Sans,sans-serif" font-weight="normal" font-size="4.5" fill="#A090A0" letter-spacing="0" opacity="1" textLength="26" lengthAdjust="spacingAndGlyphs">XXXXXXXX</text><rect x="1.5" y="13.5" width="7.0" height="7.2" fill="#D8D8D8" stroke="#fff" stroke-width="1"/><rect x="1.0" y="13.0" width="3.0" height="1.3" fill="#F04070" opacity="0.9"/><text x="3.2" y="20.0" font-family="Liberation Sans,sans-serif" font-weight="normal" font-size="4.8" fill="#909090" letter-spacing="0" opacity="1">7</text><rect x="11.0" y="13.5" width="7.0" height="7.2" fill="#D8D8D8" stroke="#fff" stroke-width="1"/><rect x="10.5" y="13.0" width="3.0" height="1.3" fill="#F04070" opacity="0.9"/><text x="12.7" y="20.0" font-family="Liberation Sans,sans-serif" font-weight="normal" font-size="4.8" fill="#909090" letter-spacing="0" opacity="1">8</text><rect x="20.5" y="13.5" width="7.0" height="7.2" fill="#D8D8D8" stroke="#fff" stroke-width="1"/><rect x="20.0" y="13.0" width="3.0" height="1.3" fill="#F04070" opacity="0.9"/><text x="22.2" y="20.0" font-family="Liberation Sans,sans-serif" font-weight="normal" font-size="4.8" fill="#909090" letter-spacing="0" opacity="1">9</text><rect x="30.0" y="13.5" width="7.0" height="7.2" fill="#D8D8D8" stroke="#fff" stroke-width="1"/><rect x="29.5" y="13.0" width="3.0" height="1.3" fill="#F04070" opacity="0.9"/><rect x="1.5" y="23.1" width="7.0" height="7.2" fill="#D8D8D8" stroke="#fff" stroke-width="1"/><rect x="1.0" y="22.6" width="3.0" height="1.3" fill="#F04070" opacity="0.9"/><text x="3.2" y="29.6" font-family="Liberation Sans,sans-serif" font-weight="normal" font-size="4.8" fill="#909090" letter-spacing="0" opacity="1">4</text><rect x="11.0" y="23.1" width="7.0" height="7.2" fill="#D8D8D8" stroke="#fff" stroke-width="1"/><rect x="10.5" y="22.6" width="3.0" height="1.3" fill="#F04070" opacity="0.9"/><text x="12.7" y="29.6" font-family="Liberation Sans,sans-serif" font-weight="normal" font-size="4.8" fill="#909090" letter-spacing="0" opacity="1">5</text><rect x="20.5" y="23.1" width="7.0" height="7.2" fill="#D8D8D8" stroke="#fff" stroke-width="1"/><rect x="20.0" y="22.6" width="3.0" height="1.3" fill="#F04070" opacity="0.9"/><text x="22.2" y="29.6" font-family="Liberation Sans,sans-serif" font-weight="normal" font-size="4.8" fill="#909090" letter-spacing="0" opacity="1">6</text><rect x="30.0" y="23.1" width="7.0" height="7.2" fill="#D8D8D8" stroke="#fff" stroke-width="1"/><rect x="29.5" y="22.6" width="3.0" height="1.3" fill="#F04070" opacity="0.9"/><text x="31.7" y="29.6" font-family="Liberation Sans,sans-serif" font-weight="normal" font-size="4.8" fill="#909090" letter-spacing="0" opacity="1">Clr</text><rect x="1.5" y="32.7" width="7.0" height="7.2" fill="#D8D8D8" stroke="#fff" stroke-width="1"/><rect x="1.0" y="32.2" width="3.0" height="1.3" fill="#F04070" opacity="0.9"/><text x="3.2" y="39.2" font-family="Liberation Sans,sans-serif" font-weight="normal" font-size="4.8" fill="#909090" letter-spacing="0" opacity="1">1</text><rect x="11.0" y="32.7" width="7.0" height="7.2" fill="#D8D8D8" stroke="#fff" stroke-width="1"/><rect x="10.5" y="32.2" width="3.0" height="1.3" fill="#F04070" opacity="0.9"/><text x="12.7" y="39.2" font-family="Liberation Sans,sans-serif" font-weight="normal" font-size="4.8" fill="#909090" letter-spacing="0" opacity="1">2</text><rect x="20.5" y="32.7" width="7.0" height="7.2" fill="#D8D8D8" stroke="#fff" stroke-width="1"/><rect x="20.0" y="32.2" width="3.0" height="1.3" fill="#F04070" opacity="0.9"/><text x="22.2" y="39.2" font-family="Liberation Sans,sans-serif" font-weight="normal" font-size="4.8" fill="#909090" letter-spacing="0" opacity="1">3</text><rect x="30.0" y="32.7" width="7.0" height="7.2" fill="#D8D8D8" stroke="#fff" stroke-width="1"/><rect x="29.5" y="32.2" width="3.0" height="1.3" fill="#F04070" opacity="0.9"/><text x="31.7" y="39.2" font-family="Liberation Sans,sans-serif" font-weight="normal" font-size="4.8" fill="#909090" letter-spacing="0" opacity="1">Bs</text><rect x="1.5" y="42.3" width="7.0" height="7.2" fill="#D8D8D8" stroke="#fff" stroke-width="1"/><rect x="1.0" y="41.8" width="3.0" height="1.3" fill="#F04070" opacity="0.9"/><rect x="11.0" y="42.3" width="7.0" height="7.2" fill="#D8D8D8" stroke="#fff" stroke-width="1"/><rect x="10.5" y="41.8" width="3.0" height="1.3" fill="#F04070" opacity="0.9"/><text x="12.7" y="48.8" font-family="Liberation Sans,sans-serif" font-weight="normal" font-size="4.8" fill="#909090" letter-spacing="0" opacity="1">0</text><rect x="20.5" y="42.3" width="16.5" height="7.2" fill="#D8D8D8" stroke="#fff" stroke-width="1"/><rect x="20.0" y="41.8" width="3.0" height="1.3" fill="#F04070" opacity="0.9"/><text x="22.2" y="48.8" font-family="Liberation Sans,sans-serif" font-weight="normal" font-size="4.8" fill="#909090" letter-spacing="0" opacity="1">Enter</text></svg></div><span class="t"></span></div>
<div class="a" style="left:233px;top:222px;width:16px;height:704px;background:linear-gradient(to right,#F1F0EA,#FBFBF9 40%,#FEFEFD)"></div>
<div class="a xpsb up" style="left:234px;top:223px"></div>
<div class="a" style="left:234px;top:439px;width:15px;height:258px;border:1px solid #fff;border-radius:2px;background:linear-gradient(to right,#CDD9FC,#C6D3FB 50%,#BCCBF6)"><div style="position:absolute;left:3px;top:124px;width:6px;height:8px;background:repeating-linear-gradient(#EEF3FD 0,#EEF3FD 1px,#8FA6E0 1px,#8FA6E0 2px)"></div></div>
<div class="a" style="left:249px;top:180px;width:6px;height:746px;background:#EDEDE1"></div>
<div class="a" style="left:250px;top:925px;width:4px;height:18px;background:#E6E6D9"></div>
<div class="a" style="left:255px;top:180px;width:1025px;height:17px;background:linear-gradient(to right,#EEECDF,#F0EFE6)"></div>
<div class="a" style="left:254px;top:195px;width:1026px;height:731px;background:#C5D3E8;border-top:2px solid #E6EEF8;border-left:1px solid #B4BFD0"></div>
<div class="a" style="left:254px;top:197px;width:1026px;height:1px;background:#9CACC4"></div>
<div class="a" style="left:260px;top:202px;width:1014px;height:724px;background:#fff;border-top:1px solid #7C7C84;border-left:1px solid #7C7C84"></div>
<div class="a" style="left:1273px;top:203px;width:2px;height:723px;background:#E4EAF3"></div>
<svg class="a" style="left:255px;top:180px" width="1025" height="18" viewBox="0 0 1025 18">
<defs><linearGradient id="tg" x1="0" y1="0" x2="0" y2="1"><stop offset="0" stop-color="#FEFEFD"/><stop offset="1" stop-color="#F1F0E9"/></linearGradient>
<linearGradient id="ta" x1="0" y1="0" x2="0" y2="1"><stop offset="0" stop-color="#FFFFFF"/><stop offset="0.5" stop-color="#EEF3FB"/><stop offset="1" stop-color="#C3D7F5"/></linearGradient></defs>
<path d="M4.5 8.5l5-4.5v9z" fill="none" stroke="#000" stroke-width="1"/>
<path d="M1009.5 4.5v9l5.5-4.5z" fill="none" stroke="#000" stroke-width="1"/>
<path d="M17 17L30 3.5Q31 2.5 33 2.5H101Q105 2.5 104 5L101 17z" fill="url(#tg)" stroke="#A9A89D" stroke-width="1"/>
<path d="M224 17C231 15 226 3 236 2.5H330Q335 2.5 335 7V17z" fill="url(#tg)" stroke="#A9A89D" stroke-width="1"/>
<path d="M336 17C343 15 338 3 348 2.5H442Q447 2.5 447 7V17z" fill="url(#tg)" stroke="#A9A89D" stroke-width="1"/>
<path d="M100 17.5L112 3.5Q113 2.5 115 2.5H220Q224 2.5 224 6.5V17.5z" fill="url(#ta)" stroke="#8FA4C4" stroke-width="1"/>
<path d="M213 6l6.5 6.5m0-6.500l-6.500 6.500" stroke="#000" stroke-width="1.700" fill="none"/>
</svg>
<div class="tab" style="left:295px">10 - 首页</div>
<div class="tab" style="left:372px;font-weight:bold;color:#000;font-family:'Liberation Sans','Noto Sans CJK SC',sans-serif;letter-spacing:0.7px">22 - 报警画面</div>
<div class="tab" style="left:494px">21 - 故障查询2</div>
<div class="tab" style="left:606px">20 - 故障查询1</div>
<div class="a" style="left:260px;top:202px;width:321px;height:235px;background:#6B808C;border-top:2px solid #808080;border-left:3px solid #808080;border-right:2px solid #000;border-bottom:3px solid #000"></div>
<div class="a" style="left:263px;top:204px;width:316px;height:230px;border-left:2px solid #000;border-top:1px solid #303030;border-right:1px solid #C0C0C0;border-bottom:1px solid #C0C0C0"></div>
<svg class="a" style="left:265px;top:388px" width="312" height="45" shape-rendering="crispEdges" fill="#E8F0F4"><rect x="16" y="16" width="1" height="1"/><rect x="36" y="16" width="1" height="1"/><rect x="56" y="16" width="1" height="1"/><rect x="76" y="16" width="1" height="1"/><rect x="96" y="16" width="1" height="1"/><rect x="116" y="16" width="1" height="1"/><rect x="136" y="16" width="1" height="1"/><rect x="156" y="16" width="1" height="1"/><rect x="176" y="16" width="1" height="1"/><rect x="196" y="16" width="1" height="1"/><rect x="216" y="16" width="1" height="1"/><rect x="236" y="16" width="1" height="1"/><rect x="256" y="16" width="1" height="1"/><rect x="276" y="16" width="1" height="1"/><rect x="296" y="16" width="1" height="1"/><rect x="16" y="35" width="1" height="1"/><rect x="36" y="35" width="1" height="1"/><rect x="56" y="35" width="1" height="1"/><rect x="76" y="35" width="1" height="1"/><rect x="96" y="35" width="1" height="1"/><rect x="116" y="35" width="1" height="1"/><rect x="136" y="35" width="1" height="1"/><rect x="156" y="35" width="1" height="1"/><rect x="176" y="35" width="1" height="1"/><rect x="196" y="35" width="1" height="1"/><rect x="216" y="35" width="1" height="1"/><rect x="236" y="35" width="1" height="1"/><rect x="256" y="35" width="1" height="1"/><rect x="276" y="35" width="1" height="1"/><rect x="296" y="35" width="1" height="1"/></svg>
<div class="a" style="left:265px;top:204px;width:316px;height:185px;background:#F0F0F0;border-style:solid;border-width:3px 5px 5px 6px;border-color:#6C6CD2 #44449A #44449A #6C6CD2"></div>
<div class="a" style="left:556px;top:207px;width:16px;height:177px;background:#E4E4E4"></div>
<div class="sbtn" style="left:556px;top:211px"><svg width="14" height="14" viewBox="0 0 14 14"><path d="M7 3L11.500 11H2.500z" fill="#000"/></svg></div>
<div class="sbtn" style="left:556px;top:365px"><svg width="14" height="14" viewBox="0 0 14 14"><path d="M7 11L11.500 3H2.500z" fill="#000"/></svg></div>
<div class="a" style="left:274px;top:211px;width:275px;height:19px;border:1px dashed #8A84D8"></div>
<div class="ev" style="left:275px;top:212px;color:#D41C1C;letter-spacing:0.05px">HH:MM:SS</div>
<div class="ev" style="left:387px;top:212px;color:#D41C1C">升降不良<span style="margin-left:3px">!</span></div>
<div class="ev" style="left:275px;top:230px;color:#F2F03C;letter-spacing:0.05px">HH:MM:SS</div>
<div class="ev" style="left:387px;top:230px;color:#F2F03C">升降不良<span style="margin-left:3px">!</span></div>
<div class="ev" style="left:275px;top:248px;color:#1E8A1E;letter-spacing:0.05px">HH:MM:SS</div>
<div class="ev" style="left:387px;top:248px;color:#1E8A1E">升降不良<span style="margin-left:3px">!</span></div>
<div class="olab" style="left:267px;top:206px">ED_0</div>
<div class="a" style="left:269px;top:373px;width:121px;height:36px;border:1px solid #F4F8FA"></div>
<div class="olab" style="left:270px;top:375px">TS_0</div>
<div class="tx" style="left:314px;top:382px;font:15px/15px 'Liberation Serif','Noto Serif CJK SC',serif;color:#000">复位</div>
<div class="dlg">
<div class="ttl"></div><div class="a" style="left:4px;top:29px;width:474px;height:1px;background:#EEF3FA"></div><div class="bl"></div><div class="br"></div><div class="bb"></div>
<div class="dt" style="left:7px;top:9px;font:bold 13px/14px 'Liberation Sans','Noto Sans CJK SC',sans-serif;color:#fff;letter-spacing:1px;text-shadow:1px 1px 0 #0A2C8C">事件显示元件属性</div>
<div class="a" style="left:456px;top:5px;width:21px;height:21px;border:1px solid #fff;border-radius:3px;background:linear-gradient(135deg,#E9947A 0,#DA5A34 30%,#CE4220 60%,#B83414 100%)"><svg width="19" height="19" viewBox="0 0 19 19"><path d="M5 5l9 9m0-9l-9 9" stroke="#fff" stroke-width="2.2" stroke-linecap="square" fill="none"/></svg></div>
<div class="a" style="left:9px;top:55px;width:462px;height:545px;border:1px solid #919B9C;border-right-color:#8A9091;border-bottom-color:#8A9091;background:linear-gradient(#FDFDFE,#FBFBFA 30%,#F4F3EE 100%);box-shadow:1px 1px 0 #D5D2C4"></div>
<div class="tabx" style="left:72px;width:58px"></div>
<div class="dt" style="left:76px;top:41px">事件显示</div>
<div class="tabx" style="left:131px;width:47px"></div>
<div class="dt" style="left:137px;top:41px">图片</div>
<div class="tabx" style="left:179px;width:46px"></div>
<div class="dt" style="left:184px;top:41px">字体</div>
<div class="tabx" style="left:226px;width:47px"></div>
<div class="dt" style="left:231px;top:41px">轮廓</div>
<div class="a" style="left:9px;top:34px;width:64px;height:23px;border:1px solid #919B9C;border-bottom:0;border-top:0;border-radius:3px 3px 0 0;background:#FDFDFE"></div>
<div class="a" style="left:9px;top:34px;width:64px;height:3px;border-radius:3px 3px 0 0;background:linear-gradient(#E68B2C,#FFC73C)"></div>
<div class="dt" style="left:17px;top:39px">一般属性</div>
<div class="dt" style="left:81px;top:71px">描述 :</div>
<div class="edit" style="left:120px;top:70px;width:332px;height:18px"><div style="position:absolute;left:3px;top:2px;width:1px;height:12px;background:#000"></div></div>
<div class="dt" style="left:81px;top:95px">方式 :</div>
<div class="edit" style="left:120px;top:94px;width:117px;height:20px"><div class="dt" style="left:3px;top:4px">即时</div><div class="ddb" style="height:16px"></div></div>
<div class="grp" style="left:22px;top:123px;width:439px;height:113px"></div>
<div class="gl" style="left:27px;top:116px;background:#F9F9F7">写入地址 :</div>
<div class="dt" style="left:40px;top:138px"><span style="font-size:11px;letter-spacing:-0.3px">PLC</span> 名称 :</div>
<div class="edit" style="left:95px;top:134px;width:267px;height:21px"><div class="dt" style="left:3px;top:5px;font-size:10.5px;letter-spacing:-0.1px">MITSUBISHI FX0n/FX2</div><div class="ddb" style="height:17px"></div></div>
<div class="btn" style="left:364px;top:135px;width:89px;height:18px;line-height:16px">设置...</div>
<div class="dt" style="left:62px;top:161px">地址 :</div>
<div class="edit" style="left:95px;top:158px;width:147px;height:21px"><div class="dt" style="left:3px;top:4px;font-size:11px">D</div><div class="ddb" style="height:17px"></div></div>
<div class="edit" style="left:243px;top:158px;width:80px;height:21px"><div class="dt" style="left:3px;top:4px;font-size:11px">10</div></div>
<div class="a" style="left:325px;top:158px;width:37px;height:21px;border:1px solid #A5ACB2;border-right-color:#E8E8E0;border-bottom-color:#E8E8E0;background:#F6F5F0"></div>
<div class="a" style="left:362px;top:158px;width:92px;height:21px;border-top:1px solid #A5ACB2;border-left:1px solid #A5ACB2;border-right:1px solid #fff;border-bottom:1px solid #fff;background:#F8F8F5"><div class="dt" style="left:0px;top:1px;font-size:11px;letter-spacing:-0.2px">16-bit Unsigned</div></div>
<div class="grp" style="left:22px;top:249px;width:439px;height:91px"></div>
<div class="gl" style="left:27px;top:242px;background:#F8F8F5">控制地址</div>
<div class="a" style="left:120px;top:316px;width:13px;height:13px;border:1px solid #1C5180;background:linear-gradient(135deg,#DCDCD7,#F3F3EF 50%,#fff)"></div>
<div class="dt" style="left:136px;top:317px">启用事件管理</div>
<div class="btn" style="left:156px;top:609px;width:73px;box-shadow:inset 0 0 0 1px #BCD4F6, inset 0 0 0 2px #9DBBEB">确定</div>
<div class="btn" style="left:237px;top:609px;width:73px">取消</div>
<div class="btn" style="left:399px;top:609px;width:73px">帮助</div>
</div>
<div class="a" style="left:0;top:957px;width:1280px;height:3px;background:linear-gradient(#6C9CDC,#3B7ACE 1px,#3878D0)"></div>
<div class="a" style="left:0;top:955px;width:1280px;height:2px;background:linear-gradient(#fff,#DCE8F6)"></div>
</div>
</body></html>
